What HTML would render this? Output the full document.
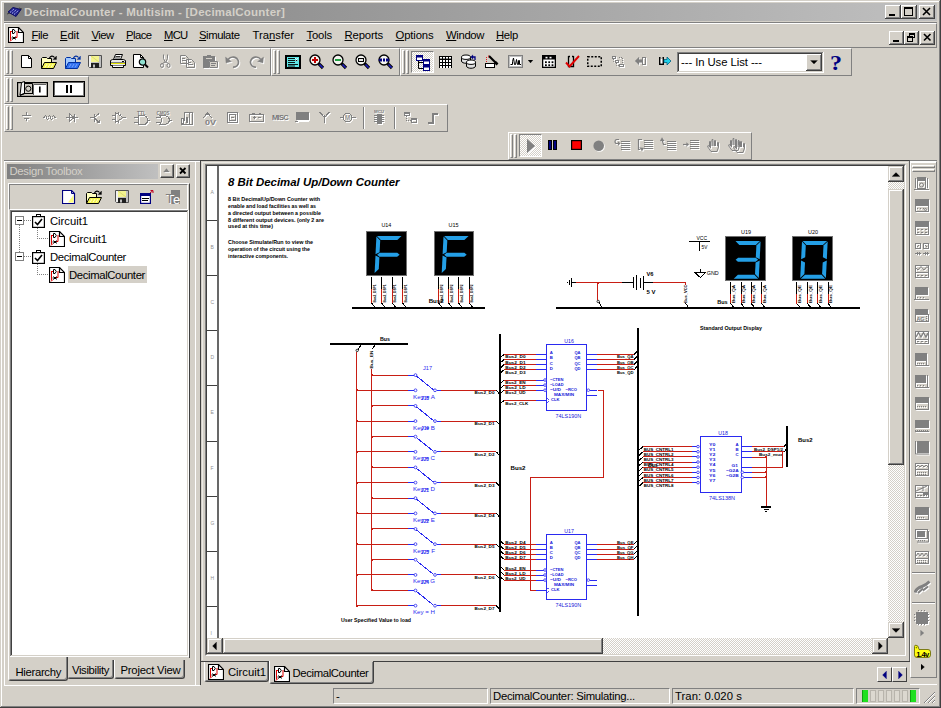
<!DOCTYPE html><html><head><meta charset="utf-8"><title>DecimalCounter - Multisim</title><style>
html,body{margin:0;padding:0}
body{width:941px;height:708px;background:#d4d0c8;position:relative;overflow:hidden;font-family:"Liberation Sans",sans-serif;font-size:11px;color:#000}
.a{position:absolute;box-sizing:border-box;display:block}
.t{position:absolute;white-space:pre}
.raised{box-shadow:inset -1px -1px 0 #404040,inset 1px 1px 0 #fff,inset -2px -2px 0 #808080,inset 2px 2px 0 #d4d0c8;background:#d4d0c8}
.sraised{box-shadow:inset -1px -1px 0 #404040,inset 1px 1px 0 #d4d0c8,inset -2px -2px 0 #808080,inset 2px 2px 0 #fff;background:#d4d0c8}
.sunken{box-shadow:inset -1px -1px 0 #fff,inset 1px 1px 0 #808080,inset -2px -2px 0 #d4d0c8,inset 2px 2px 0 #404040}
.tb{border:1px solid;border-color:#fff #808080 #808080 #fff}
.thin-s{border:1px solid;border-color:#808080 #fff #fff #808080}
.grip{border:1px solid;border-color:#fff #808080 #808080 #fff;width:3px}
.chk{background-color:#d4d0c8;background-image:conic-gradient(#fff 0 25%,#d4d0c8 0 50%,#fff 0 75%,#d4d0c8 0);background-size:2px 2px}
u{text-decoration:underline;text-underline-offset:1px}
</style></head><body>
<div class="a " style="left:0px;top:0px;width:941px;height:708px;box-shadow:inset -1px -1px 0 #404040,inset 1px 1px 0 #d4d0c8,inset -2px -2px 0 #808080,inset 2px 2px 0 #fff;"></div>
<div class="a " style="left:4px;top:3px;width:933px;height:18px;background:linear-gradient(90deg,#808080,#c0c0c0);"></div>
<svg class="a" style="left:6.5px;top:5.5px" width="16" height="13" viewBox="0 0 16 13" ><path d="M1 6L6 1.5L14 3.5L9 10.5Z" stroke="#101060" fill="#202090" stroke-width="1" /><path d="M3 6.5L7 3M5 7.5L9.5 3.5M7 8.5L11.5 4.5" stroke="#c8d0ff" fill="none" stroke-width="1" stroke-dasharray="1.2 1"/><path d="M0 8L3 7M12 2L15 3" stroke="#303030" fill="none" stroke-width="0.8" /></svg>
<div class="t" style="left:24px;top:7.27px;font-size:11.5px;line-height:11.5px;letter-spacing:0.225px;font-weight:bold;color:#d4d0c8;">DecimalCounter - Multisim - [DecimalCounter]</div>
<div class="a raised" style="left:885px;top:5px;width:16px;height:14px;"></div>
<svg class="a" style="left:885px;top:5px" width="16" height="14" viewBox="0 0 16 14" ><rect x="4" y="9" width="6" height="2" fill="#000" /></svg>
<div class="a raised" style="left:901px;top:5px;width:16px;height:14px;"></div>
<svg class="a" style="left:901px;top:5px" width="16" height="14" viewBox="0 0 16 14" ><rect x="3.5" y="2.5" width="8" height="8" fill="none" stroke="#000" stroke-width="1"/><rect x="3" y="2" width="9" height="2" fill="#000" /></svg>
<div class="a raised" style="left:919px;top:5px;width:16px;height:14px;"></div>
<svg class="a" style="left:919px;top:5px" width="16" height="14" viewBox="0 0 16 14" ><path d="M4 3L11 10M11 3L4 10" stroke="#000" fill="none" stroke-width="1.6" /></svg>
<div class="a " style="left:4px;top:22px;width:933px;height:1px;background:#808080"></div>
<div class="a tb" style="left:4px;top:23px;width:933px;height:25px;"></div>
<svg class="a" style="left:8px;top:27px" width="16" height="16" viewBox="0 0 16 16" ><path d="M0.5 0.5H10.5L15.5 5.5V15.5H0.5Z" stroke="#000" fill="#fff" stroke-width="1.2" /><path d="M10.5 0.5V5.5H15.5" stroke="#000" fill="none" stroke-width="1.2" /><path d="M2.5 4V13.5M2.5 4.5H5M9 4V10.5H6.5M2 14.5L4 12.5" stroke="#e00000" fill="none" stroke-width="1" /><path d="M4.5 2.5V6.5H6Q8.5 4.5 6 2.5Z" stroke="#000" fill="#fff" stroke-width="1" /><path d="M4.5 9.5L7.5 12.5M7.5 9.5L4.5 12.5M3.5 11H8" stroke="#000" fill="none" stroke-width="1" /></svg>
<div class="t" style="left:31.5px;top:30.43px;font-size:11.3px;line-height:11.3px;letter-spacing:-0.427px;"><u>F</u>ile</div>
<div class="t" style="left:60px;top:30.43px;font-size:11.3px;line-height:11.3px;letter-spacing:-0.118px;"><u>E</u>dit</div>
<div class="t" style="left:91.5px;top:30.43px;font-size:11.3px;line-height:11.3px;letter-spacing:-0.572px;"><u>V</u>iew</div>
<div class="t" style="left:126px;top:30.43px;font-size:11.3px;line-height:11.3px;letter-spacing:-0.553px;"><u>P</u>lace</div>
<div class="t" style="left:164px;top:30.43px;font-size:11.3px;line-height:11.3px;letter-spacing:-0.745px;"><u>M</u>CU</div>
<div class="t" style="left:199px;top:30.43px;font-size:11.3px;line-height:11.3px;letter-spacing:-0.433px;"><u>S</u>imulate</div>
<div class="t" style="left:252.5px;top:30.43px;font-size:11.3px;line-height:11.3px;letter-spacing:-0.019px;">Tra<u>n</u>sfer</div>
<div class="t" style="left:306.5px;top:30.43px;font-size:11.3px;line-height:11.3px;letter-spacing:-0.176px;"><u>T</u>ools</div>
<div class="t" style="left:344.5px;top:30.43px;font-size:11.3px;line-height:11.3px;letter-spacing:-0.152px;"><u>R</u>eports</div>
<div class="t" style="left:395.5px;top:30.43px;font-size:11.3px;line-height:11.3px;letter-spacing:-0.135px;"><u>O</u>ptions</div>
<div class="t" style="left:446px;top:30.43px;font-size:11.3px;line-height:11.3px;letter-spacing:-0.365px;"><u>W</u>indow</div>
<div class="t" style="left:496px;top:30.43px;font-size:11.3px;line-height:11.3px;letter-spacing:-0.310px;"><u>H</u>elp</div>
<div class="a raised" style="left:889px;top:31px;width:15px;height:14px;"></div>
<svg class="a" style="left:889px;top:31px" width="15" height="14" viewBox="0 0 15 14" ><rect x="4" y="9" width="6" height="2" fill="#000" /></svg>
<div class="a raised" style="left:904px;top:31px;width:15px;height:14px;"></div>
<svg class="a" style="left:904px;top:31px" width="15" height="14" viewBox="0 0 15 14" ><rect x="5.5" y="2.5" width="5" height="4" fill="#d4d0c8" stroke="#000" stroke-width="1"/><rect x="5" y="2" width="6" height="2" fill="#000" /><rect x="3.5" y="5.5" width="5" height="5" fill="#d4d0c8" stroke="#000" stroke-width="1"/><rect x="3" y="5" width="6" height="2" fill="#000" /></svg>
<div class="a raised" style="left:920px;top:31px;width:15px;height:14px;"></div>
<svg class="a" style="left:920px;top:31px" width="15" height="14" viewBox="0 0 15 14" ><path d="M4 3L10.5 9.5M10.5 3L4 9.5" stroke="#000" fill="none" stroke-width="1.6" /></svg>
<div class="a tb" style="left:4px;top:48px;width:267px;height:28px;"></div>
<div class="a grip" style="left:6px;top:50px;width:3px;height:24px;"></div>
<div class="a grip" style="left:10px;top:50px;width:3px;height:24px;"></div>
<div class="a tb" style="left:271px;top:48px;width:129px;height:28px;"></div>
<div class="a grip" style="left:273px;top:50px;width:3px;height:24px;"></div>
<div class="a grip" style="left:277px;top:50px;width:3px;height:24px;"></div>
<div class="a tb" style="left:400px;top:48px;width:452px;height:28px;"></div>
<div class="a grip" style="left:402px;top:50px;width:3px;height:24px;"></div>
<div class="a grip" style="left:406px;top:50px;width:3px;height:24px;"></div>
<svg class="a" style="left:21px;top:55px" width="12" height="14" viewBox="0 0 12 14" ><path d="M0.5 0.5H7.5L10.5 3.5V12.5H0.5Z" stroke="#000" fill="#fff" stroke-width="1" /><path d="M7.5 0.5V3.5H10.5" stroke="#000" fill="none" stroke-width="1" /></svg>
<svg class="a" style="left:41px;top:55px" width="17" height="15" viewBox="0 0 17 15" ><path d="M0.5 13.5V3.5L1.5 2.5H5.5L6.5 3.5H10.5V7" stroke="#000" fill="#ffffc0" stroke-width="1" /><path d="M0.5 13.5L3.5 7.5H15.5L12.5 13.5Z" stroke="#000" fill="#f4f450" stroke-width="1" /><path d="M4 12.5L6 9M7 12.5L9 9M10 12.5L12 9" stroke="#ffffc8" fill="none" stroke-width="1" /><path d="M8.5 3C9.5 0.8 12 0.5 13.5 2.5" stroke="#000" fill="none" stroke-width="1.2" /><path d="M12 4.5H15.5V1Z" stroke="#000" fill="#000" stroke-width="0.3" /></svg>
<svg class="a" style="left:64.5px;top:55px" width="17" height="15" viewBox="0 0 17 15" ><path d="M0.5 13.5V3.5L1.5 2.5H5.5L6.5 3.5H10.5V7" stroke="#0030a0" fill="#a0c8ff" stroke-width="1" /><path d="M0.5 13.5L3.5 7.5H15.5L12.5 13.5Z" stroke="#0030a0" fill="#3070f0" stroke-width="1" /><path d="M4 12.5L6 9M7 12.5L9 9M10 12.5L12 9" stroke="#70a0ff" fill="none" stroke-width="1" /><path d="M8.5 3C9.5 0.8 12 0.5 13.5 2.5" stroke="#0030a0" fill="none" stroke-width="1.2" /><path d="M12 4.5H15.5V1Z" stroke="#0030a0" fill="#0030a0" stroke-width="0.3" /></svg>
<svg class="a" style="left:88px;top:55px" width="15" height="14" viewBox="0 0 15 14" ><path d="M0.5 0.5H13.5V12.5H1.5L0.5 11.5Z" stroke="#505050" fill="#c0c0c0" stroke-width="1" /><rect x="1" y="1" width="2" height="11" fill="#f0f0f0" /><rect x="3" y="1" width="8" height="6" fill="#f4f490" /><path d="M3 1L11 7" stroke="#dcdc70" fill="none" stroke-width="1" /><rect x="3" y="8" width="8" height="5" fill="#202020" /><rect x="5" y="9.5" width="2" height="3" fill="#c0c0c0" /></svg>
<svg class="a" style="left:110px;top:54px" width="17" height="15" viewBox="0 0 17 15" ><path d="M3.5 5.5L5.5 0.5H12.5L10.5 5.5" stroke="#000" fill="#fff" stroke-width="1" /><path d="M5.5 2.5H10.5M5 4H10" stroke="#000" fill="none" stroke-width="0.8" /><path d="M0.5 6.5L2.5 5.5H13.5L15.5 6.5V11.5H0.5Z" stroke="#000" fill="#e8e8e8" stroke-width="1" /><rect x="1" y="9" width="14" height="1" fill="#e0e000" /><rect x="1" y="8" width="14" height="1" fill="#808080" /><path d="M2.5 11.5V13.5H13.5V11.5" stroke="#000" fill="#fff" stroke-width="1" /><rect x="12" y="7" width="2" height="1" fill="#000" /></svg>
<svg class="a" style="left:133px;top:54px" width="17" height="15" viewBox="0 0 17 15" ><path d="M0.5 0.5H7.5L10.5 3.5V13.5H0.5Z" stroke="#000" fill="#fff" stroke-width="1" /><path d="M7.5 0.5V3.5H10.5" stroke="#000" fill="none" stroke-width="1" /><circle cx="9.5" cy="8" r="3.2" fill="#8fe0d0" stroke="#000" stroke-width="1.2"/><path d="M12 10.5L15 13.5" stroke="#000" fill="none" stroke-width="2" /></svg>
<svg class="a" style="left:159.5px;top:54px" width="12" height="16" viewBox="0 0 12 16" ><g transform="translate(1,1)"><path d="M3.5 0.5V4.5L5.5 8.5M7.5 0.5V4.5L5.5 8.5" stroke="#fff" fill="none" stroke-width="1" /><path d="M5 8L2.5 9.5" stroke="#fff" fill="none" stroke-width="1" /><path d="M6 8L8.5 9.5" stroke="#fff" fill="none" stroke-width="1" /><ellipse cx="2" cy="11.5" rx="1.5" ry="2" fill="none" stroke="#fff"/><ellipse cx="8.5" cy="11.5" rx="1.5" ry="2" fill="none" stroke="#fff"/></g><path d="M3.5 0.5V4.5L5.5 8.5M7.5 0.5V4.5L5.5 8.5" stroke="#808080" fill="none" stroke-width="1" /><path d="M5 8L2.5 9.5" stroke="#808080" fill="none" stroke-width="1" /><path d="M6 8L8.5 9.5" stroke="#808080" fill="none" stroke-width="1" /><ellipse cx="2" cy="11.5" rx="1.5" ry="2" fill="none" stroke="#808080"/><ellipse cx="8.5" cy="11.5" rx="1.5" ry="2" fill="none" stroke="#808080"/></svg>
<svg class="a" style="left:180px;top:54.5px" width="16" height="14" viewBox="0 0 16 14" ><g transform="translate(1,1)"><path d="M0.5 0.5H5.5L8.5 3.5V8.5H0.5Z" stroke="#fff" fill="none" stroke-width="1" /><path d="M2 3.5H5M2 5.5H7" stroke="#fff" fill="none" stroke-width="1" /><path d="M6.5 4.5H11.5L14.5 7.5V12.5H6.5Z" stroke="#fff" fill="none" stroke-width="1" /><path d="M8 7.5H11M8 9.5H13" stroke="#fff" fill="none" stroke-width="1" /></g><path d="M0.5 0.5H5.5L8.5 3.5V8.5H0.5Z" stroke="#808080" fill="none" stroke-width="1" /><path d="M2 3.5H5M2 5.5H7" stroke="#808080" fill="none" stroke-width="1" /><path d="M6.5 4.5H11.5L14.5 7.5V12.5H6.5Z" stroke="#808080" fill="none" stroke-width="1" /><path d="M8 7.5H11M8 9.5H13" stroke="#808080" fill="none" stroke-width="1" /></svg>
<svg class="a" style="left:203px;top:54.5px" width="17" height="15" viewBox="0 0 17 15" ><g transform="translate(1,1)"><rect x="0" y="1" width="12" height="12" fill="#fff" /><rect x="4" y="0" width="4" height="2" fill="#fff" /><rect x="6" y="6" width="9" height="7" fill="#fff" /><path d="M6.5 6.5H14.5V12.5H6.5Z" stroke="#fff" fill="#fff" stroke-width="1" /><path d="M8 8.5H13M8 10.5H12" stroke="#fff" fill="none" stroke-width="1" /><rect x="3" y="3" width="6" height="1" fill="#fff" /></g><rect x="0" y="1" width="12" height="12" fill="#808080" /><rect x="4" y="0" width="4" height="2" fill="#808080" /><rect x="6" y="6" width="9" height="7" fill="#fff" /><path d="M6.5 6.5H14.5V12.5H6.5Z" stroke="#808080" fill="#d4d0c8" stroke-width="1" /><path d="M8 8.5H13M8 10.5H12" stroke="#808080" fill="none" stroke-width="1" /><rect x="3" y="3" width="6" height="1" fill="#d4d0c8" /></svg>
<svg class="a" style="left:224.5px;top:55px" width="18" height="15" viewBox="0 0 18 15" ><g transform="translate(1,1)"><path d="M3 4.5C6 1 12 1 13.5 6.5C14 10 11 12.5 8 12" stroke="#fff" fill="none" stroke-width="1.6" /><path d="M0.5 2L1 8L6.5 6.5Z" stroke="#fff" fill="#fff" stroke-width="0.3" /></g><path d="M3 4.5C6 1 12 1 13.5 6.5C14 10 11 12.5 8 12" stroke="#808080" fill="none" stroke-width="1.6" /><path d="M0.5 2L1 8L6.5 6.5Z" stroke="#808080" fill="#808080" stroke-width="0.3" /></svg>
<svg class="a" style="left:248px;top:55px" width="18" height="15" viewBox="0 0 18 15" ><g transform="translate(1,1)"><path d="M13 4.5C10 1 4 1 2.5 6.5C2 10 5 12.5 8 12" stroke="#fff" fill="none" stroke-width="1.6" /><path d="M15.5 2L15 8L9.5 6.5Z" stroke="#fff" fill="#fff" stroke-width="0.3" /></g><path d="M13 4.5C10 1 4 1 2.5 6.5C2 10 5 12.5 8 12" stroke="#808080" fill="none" stroke-width="1.6" /><path d="M15.5 2L15 8L9.5 6.5Z" stroke="#808080" fill="#808080" stroke-width="0.3" /></svg>
<svg class="a" style="left:285px;top:54.5px" width="16" height="14" viewBox="0 0 16 14" ><rect x="0" y="0" width="16" height="14" fill="#000" /><rect x="2" y="2" width="12" height="10" fill="#60e8e8" /><path d="M3 3.5H10M3 5.5H13M3 7.5H10M3 9.5H13M3 11H10" stroke="#000" fill="none" stroke-width="0.9" /><path d="M10 3L13 6M13 3L10 6" stroke="#fff" fill="none" stroke-width="0.7" /></svg>
<svg class="a" style="left:309px;top:54px" width="16" height="16" viewBox="0 0 16 16" ><circle cx="6" cy="6" r="5" fill="#f4f4f0" stroke="#000" stroke-width="1.3"/><path d="M9.7 9.7L14 14" stroke="#000" fill="none" stroke-width="3.2" /><path d="M10.5 10.5L13.7 13.7" stroke="#2020c0" fill="none" stroke-width="1.6" /><rect x="3" y="5" width="6" height="2" fill="#c00000" /><rect x="5" y="3" width="2" height="6" fill="#c00000" /></svg>
<svg class="a" style="left:332px;top:54px" width="16" height="16" viewBox="0 0 16 16" ><circle cx="6" cy="6" r="5" fill="#f4f4f0" stroke="#000" stroke-width="1.3"/><path d="M9.7 9.7L14 14" stroke="#000" fill="none" stroke-width="3.2" /><path d="M10.5 10.5L13.7 13.7" stroke="#2020c0" fill="none" stroke-width="1.6" /><rect x="3" y="5" width="6" height="2" fill="#20a040" /></svg>
<svg class="a" style="left:355px;top:54px" width="16" height="16" viewBox="0 0 16 16" ><circle cx="6" cy="6" r="5" fill="#f4f4f0" stroke="#000" stroke-width="1.3"/><path d="M9.7 9.7L14 14" stroke="#000" fill="none" stroke-width="3.2" /><path d="M10.5 10.5L13.7 13.7" stroke="#2020c0" fill="none" stroke-width="1.6" /><rect x="3.5" y="4.5" width="5" height="3" fill="#e8e8e8" stroke="#000" stroke-width="1"/></svg>
<svg class="a" style="left:378px;top:54px" width="16" height="16" viewBox="0 0 16 16" ><circle cx="6" cy="6" r="5" fill="#f4f4f0" stroke="#000" stroke-width="1.3"/><path d="M9.7 9.7L14 14" stroke="#000" fill="none" stroke-width="3.2" /><path d="M10.5 10.5L13.7 13.7" stroke="#2020c0" fill="none" stroke-width="1.6" /><rect x="2" y="4.5" width="2" height="3" fill="#000080" /><rect x="5" y="4.5" width="2" height="3" fill="#000080" /><rect x="8" y="4.5" width="2" height="3" fill="#000080" /><path d="M0.5 6L2 4.5V7.5ZM11.5 6L10 4.5V7.5Z" stroke="#000080" fill="#000080" stroke-width="0.2" /></svg>
<div class="a chk" style="left:411px;top:51px;width:23px;height:22px;border:1px solid;border-color:#808080 #fff #fff #808080;"></div>
<svg class="a" style="left:416px;top:55px" width="14" height="16" viewBox="0 0 14 16" ><rect x="0.5" y="0.5" width="6" height="5" fill="#fff" stroke="#000080" stroke-width="1"/><rect x="0" y="0" width="7" height="2.5" fill="#000080" /><rect x="7.5" y="4.5" width="6" height="5" fill="#fff" stroke="#000080" stroke-width="1"/><rect x="7" y="4" width="7" height="2.5" fill="#000080" /><rect x="7.5" y="10.5" width="6" height="5" fill="#fff" stroke="#000080" stroke-width="1"/><rect x="7" y="10" width="7" height="2.5" fill="#000080" /><path d="M2.5 6V13.5H7M2.5 7.5H7" stroke="#000" fill="none" stroke-width="1" /></svg>
<svg class="a" style="left:439px;top:56px" width="13" height="12" viewBox="0 0 13 12" ><rect x="0" y="0" width="13" height="12" fill="#000" /><rect x="1" y="1" width="2" height="1.6" fill="#fff" /><rect x="1" y="4" width="2" height="2" fill="#fff" /><rect x="1" y="7" width="2" height="2" fill="#fff" /><rect x="1" y="10" width="2" height="2" fill="#fff" /><rect x="4" y="1" width="2" height="1.6" fill="#fff" /><rect x="4" y="4" width="2" height="2" fill="#fff" /><rect x="4" y="7" width="2" height="2" fill="#fff" /><rect x="4" y="10" width="2" height="2" fill="#fff" /><rect x="7" y="1" width="2" height="1.6" fill="#fff" /><rect x="7" y="4" width="2" height="2" fill="#fff" /><rect x="7" y="7" width="2" height="2" fill="#fff" /><rect x="7" y="10" width="2" height="2" fill="#fff" /><rect x="10" y="1" width="2" height="1.6" fill="#fff" /><rect x="10" y="4" width="2" height="2" fill="#fff" /><rect x="10" y="7" width="2" height="2" fill="#fff" /><rect x="10" y="10" width="2" height="2" fill="#fff" /></svg>
<svg class="a" style="left:461px;top:53.5px" width="17" height="16" viewBox="0 0 17 16" ><path d="M0.5 3V7C0.5 10 9.5 10 9.5 7V3" fill="#e0e0e0" stroke="#000"/><ellipse cx="5" cy="3.2" rx="4.5" ry="2.2" fill="#fff" stroke="#000"/><path d="M5.5 8V12C5.5 15 14.5 15 14.5 12V8" fill="#e0e0e0" stroke="#000"/><ellipse cx="10" cy="8.2" rx="4.5" ry="2.2" fill="#fff" stroke="#000"/><path d="M14 6V3H11" stroke="#000080" fill="none" stroke-width="1.3" /><path d="M9.5 3L12 0.8V5.2Z" stroke="#000080" fill="#000080" stroke-width="0.2" /></svg>
<svg class="a" style="left:485px;top:55px" width="14" height="14" viewBox="0 0 14 14" ><path d="M4 1L12 9" stroke="#000" fill="none" stroke-width="2.2" /><path d="M10 7L12.5 9.5" stroke="#000" fill="none" stroke-width="2.6" /><rect x="0.5" y="8.5" width="9" height="4" fill="#fff" stroke="#000" stroke-width="1"/><path d="M1.5 2V8M3.5 0.5V3" stroke="#e02020" fill="none" stroke-width="1" stroke-dasharray="1 1"/></svg>
<svg class="a" style="left:507.5px;top:55px" width="15" height="13" viewBox="0 0 15 13" ><rect x="0.5" y="0.5" width="14" height="12" fill="#c0c0c0" stroke="#808080" stroke-width="1"/><rect x="2" y="2" width="11" height="9" fill="#fff" /><path d="M2.5 9.5H4.5V6.5L5.5 3L6.5 9.5H7.5L8.5 4.5L9.5 9.5H10.5V5.5H11.5V9.5H13" stroke="#000" fill="none" stroke-width="1" /></svg>
<svg class="a" style="left:528px;top:60px" width="6" height="4" viewBox="0 0 6 4" ><path d="M0 0H5L2.5 3Z" stroke="#000" fill="#000" stroke-width="0.2" /></svg>
<svg class="a" style="left:541.5px;top:55px" width="14" height="13" viewBox="0 0 14 13" ><rect x="0.65" y="0.65" width="12.7" height="11.7" fill="#fff" stroke="#000" stroke-width="1.3"/><rect x="1" y="1" width="12" height="3.5" fill="#000" /><rect x="3.5" y="1.8" width="2" height="1.6" fill="#fff" /><rect x="7.5" y="1.8" width="2" height="1.6" fill="#fff" /><rect x="3" y="6.3" width="1.8" height="1.8" fill="#000" /><rect x="3" y="9.3" width="1.8" height="1.8" fill="#000" /><rect x="6.3" y="6.3" width="1.8" height="1.8" fill="#000" /><rect x="6.3" y="9.3" width="1.8" height="1.8" fill="#000" /><rect x="9.6" y="6.3" width="1.8" height="1.8" fill="#000" /><rect x="9.6" y="9.3" width="1.8" height="1.8" fill="#000" /></svg>
<svg class="a" style="left:564.5px;top:55px" width="16" height="13" viewBox="0 0 16 13" ><path d="M3.5 1V11.5H8.5V1M3.5 1.5H5M7 1.5H8.5" stroke="#000" fill="none" stroke-width="1.3" /><path d="M1 7.5L4.5 11.5L14 1" stroke="#e00000" fill="none" stroke-width="1.9" /></svg>
<svg class="a" style="left:587px;top:56px" width="15" height="11" viewBox="0 0 15 11" ><rect x="0.75" y="0.75" width="13.5" height="9.5" fill="none" stroke="#000" stroke-width="1.5" stroke-dasharray="2 1.5"/></svg>
<svg class="a" style="left:612px;top:56px" width="14" height="12" viewBox="0 0 14 12" ><g transform="translate(1,1)"><rect x="0.5" y="0.5" width="3" height="2" fill="none" stroke="#fff" stroke-width="1"/><rect x="3.5" y="4.5" width="3" height="2" fill="none" stroke="#fff" stroke-width="1"/><rect x="7.5" y="8.5" width="4" height="2" fill="none" stroke="#fff" stroke-width="1"/><path d="M1.5 3V5.5H3M4.5 7V9.5H7M7 1.5H10.5V8" stroke="#fff" fill="none" stroke-width="1" stroke-dasharray="1 1"/></g><rect x="0.5" y="0.5" width="3" height="2" fill="none" stroke="#808080" stroke-width="1"/><rect x="3.5" y="4.5" width="3" height="2" fill="none" stroke="#808080" stroke-width="1"/><rect x="7.5" y="8.5" width="4" height="2" fill="none" stroke="#808080" stroke-width="1"/><path d="M1.5 3V5.5H3M4.5 7V9.5H7M7 1.5H10.5V8" stroke="#808080" fill="none" stroke-width="1" stroke-dasharray="1 1"/></svg>
<svg class="a" style="left:635px;top:57px" width="13" height="10" viewBox="0 0 13 10" ><g transform="translate(1,1)"><path d="M0 4L4 0V2.5H7V5.5H4V8Z" stroke="#fff" fill="#fff" stroke-width="0.2" /><rect x="7.5" y="0.5" width="3" height="7" fill="none" stroke="#fff" stroke-width="1"/></g><path d="M0 4L4 0V2.5H7V5.5H4V8Z" stroke="#808080" fill="#808080" stroke-width="0.2" /><rect x="7.5" y="0.5" width="3" height="7" fill="none" stroke="#808080" stroke-width="1"/></svg>
<svg class="a" style="left:659px;top:57px" width="13" height="9" viewBox="0 0 13 9" ><rect x="0.7" y="0.7" width="3.6" height="6.6" fill="#fff" stroke="#000" stroke-width="1.4"/><rect x="1.5" y="0" width="2" height="1.5" fill="#d4d0c8" /><path d="M5 2.5H8V0L12 4L8 8V5.5H5Z" stroke="#006080" fill="#20d0e8" stroke-width="0.8" /></svg>
<div class="a sunken" style="left:677px;top:52px;width:147px;height:21px;background:#fff"></div>
<div class="t" style="left:681px;top:57.43px;font-size:11.3px;line-height:11.3px;letter-spacing:-0.065px;">--- In Use List ---</div>
<div class="a raised" style="left:806px;top:54px;width:16px;height:17px;"></div>
<svg class="a" style="left:810px;top:60px" width="8" height="5" viewBox="0 0 8 5" ><path d="M0.5 0.5H7.5L4 4Z" stroke="#000" fill="#000" stroke-width="0.2" /></svg>
<div class="t" style="left:830px;top:52.57px;font-size:20px;line-height:20px;font-weight:bold;color:#000080;font-family:'Liberation Serif',serif;transform:scaleX(1.2);transform-origin:0 0;">?</div>
<div class="a tb" style="left:4px;top:76px;width:85px;height:28px;"></div>
<div class="a grip" style="left:6px;top:78px;width:3px;height:24px;"></div>
<div class="a grip" style="left:10px;top:78px;width:3px;height:24px;"></div>
<svg class="a" style="left:17px;top:81px" width="31" height="16" viewBox="0 0 31 16" ><rect x="0.6" y="1.6" width="29.8" height="13.8" fill="#d4d0c8" stroke="#000" stroke-width="1.2"/><rect x="16" y="3" width="13" height="11" fill="#fff" /><path d="M16.5 14V3.5H29" stroke="#606060" fill="none" stroke-width="1" /><rect x="22" y="5.5" width="1.6" height="6" fill="#000" /><path d="M3 14L4.5 1.5L7.5 0.5V12.5Z" stroke="#000" fill="#f4f4f4" stroke-width="1" /><path d="M7.5 2.5H15.5V13" stroke="#000" fill="#c8c4bc" stroke-width="1" /><circle cx="11.3" cy="7.7" r="2.6" fill="#d4d0c8" stroke="#000"/><path d="M3 14.5L7.5 12.5H15" stroke="#000" fill="none" stroke-width="1.2" /></svg>
<svg class="a" style="left:53px;top:81px" width="32" height="16" viewBox="0 0 32 16" ><rect x="0.8" y="0.8" width="30.4" height="14.4" fill="#fff" stroke="#000" stroke-width="1.6"/><rect x="1" y="14" width="30" height="1" fill="#808080" /><rect x="30" y="1" width="1" height="14" fill="#808080" /><rect x="13" y="4" width="2" height="8" fill="#000" /><rect x="17" y="4" width="2" height="8" fill="#000" /></svg>
<div class="a tb" style="left:4px;top:104px;width:444px;height:28px;"></div>
<div class="a grip" style="left:6px;top:106px;width:3px;height:24px;"></div>
<div class="a grip" style="left:10px;top:106px;width:3px;height:24px;"></div>
<svg class="a" style="left:22px;top:112px" width="12" height="12" viewBox="0 0 12 12" shape-rendering="crispEdges"><g transform="translate(1,1)"><path d="M4.5 0V3M4.5 6V9" stroke="#fff" fill="none" stroke-width="1" /><path d="M0 3.5H9M2 6.5H7" stroke="#fff" fill="none" stroke-width="1" /></g><path d="M4.5 0V3M4.5 6V9" stroke="#808080" fill="none" stroke-width="1" /><path d="M0 3.5H9M2 6.5H7" stroke="#808080" fill="none" stroke-width="1" /></svg>
<svg class="a" style="left:43px;top:113.5px" width="16" height="8" viewBox="0 0 16 8" shape-rendering="crispEdges"><g transform="translate(1,1)"><path d="M0 3.5H1.5Q2.5 -0.5 3.5 3.5Q4.5 7 5.5 3.5Q6.5 -0.5 7.5 3.5Q8.5 7 9.5 3.5Q10.5 -0.5 11.5 3.5H13" stroke="#fff" fill="none" stroke-width="1" /></g><path d="M0 3.5H1.5Q2.5 -0.5 3.5 3.5Q4.5 7 5.5 3.5Q6.5 -0.5 7.5 3.5Q8.5 7 9.5 3.5Q10.5 -0.5 11.5 3.5H13" stroke="#808080" fill="none" stroke-width="1" /></svg>
<svg class="a" style="left:66px;top:112.5px" width="14" height="11" viewBox="0 0 14 11" shape-rendering="crispEdges"><g transform="translate(1,1)"><path d="M0 4.5H11.5M3.5 1V8L8 4.5ZM8.5 0.5V8.5" stroke="#fff" fill="none" stroke-width="1" /></g><path d="M0 4.5H11.5M3.5 1V8L8 4.5ZM8.5 0.5V8.5" stroke="#808080" fill="none" stroke-width="1" /></svg>
<svg class="a" style="left:90px;top:112.5px" width="12" height="12" viewBox="0 0 12 12" shape-rendering="crispEdges"><g transform="translate(1,1)"><path d="M0 4.5H4.5M4.5 0.5V9M4.5 4L9 0.5M4.5 5L9 9.5M9 9.5V7M9 9.5H6.5" stroke="#fff" fill="none" stroke-width="1" /></g><path d="M0 4.5H4.5M4.5 0.5V9M4.5 4L9 0.5M4.5 5L9 9.5M9 9.5V7M9 9.5H6.5" stroke="#808080" fill="none" stroke-width="1" /></svg>
<svg class="a" style="left:111.5px;top:111.5px" width="16" height="13" viewBox="0 0 16 13" shape-rendering="crispEdges"><g transform="translate(1,1)"><path d="M0 3.5H3M0 7.5H3M3.5 0.5V10.5L11 5.5ZM11 5.5H13.5M6 0V2.5M6 8.5V11M8 1.5V3.5" stroke="#fff" fill="none" stroke-width="1" /></g><path d="M0 3.5H3M0 7.5H3M3.5 0.5V10.5L11 5.5ZM11 5.5H13.5M6 0V2.5M6 8.5V11M8 1.5V3.5" stroke="#808080" fill="none" stroke-width="1" /></svg>
<svg class="a" style="left:133.5px;top:111px" width="18" height="15" viewBox="0 0 18 15" shape-rendering="crispEdges"><g transform="translate(1,1)"><path d="M0 6.5H4M0 11.5H4M4.5 4.5V13.5H9C15 13.5 15 4.5 9 4.5ZM13.5 9H16" stroke="#fff" fill="none" stroke-width="1" /><text x="3" y="4" font-size="5" fill="#fff" font-family="Liberation Sans, sans-serif" font-weight="bold" textLength="9" lengthAdjust="spacingAndGlyphs">TTL</text></g><path d="M0 6.5H4M0 11.5H4M4.5 4.5V13.5H9C15 13.5 15 4.5 9 4.5ZM13.5 9H16" stroke="#808080" fill="none" stroke-width="1" /><text x="3" y="4" font-size="5" fill="#808080" font-family="Liberation Sans, sans-serif" font-weight="bold" textLength="9" lengthAdjust="spacingAndGlyphs">TTL</text></svg>
<svg class="a" style="left:156px;top:111px" width="19" height="15" viewBox="0 0 19 15" shape-rendering="crispEdges"><g transform="translate(1,1)"><path d="M0 6.5H4M0 11.5H4M3.5 4.5C6 6 6 12 3.5 13.5H8C11 13.5 13 11 14 9C13 7 11 4.5 8 4.5ZM14 9H16" stroke="#fff" fill="none" stroke-width="1" /><text x="0.5" y="4" font-size="5" fill="#fff" font-family="Liberation Sans, sans-serif" font-weight="bold" textLength="13" lengthAdjust="spacingAndGlyphs">CMOS</text></g><path d="M0 6.5H4M0 11.5H4M3.5 4.5C6 6 6 12 3.5 13.5H8C11 13.5 13 11 14 9C13 7 11 4.5 8 4.5ZM14 9H16" stroke="#808080" fill="none" stroke-width="1" /><text x="0.5" y="4" font-size="5" fill="#808080" font-family="Liberation Sans, sans-serif" font-weight="bold" textLength="13" lengthAdjust="spacingAndGlyphs">CMOS</text></svg>
<svg class="a" style="left:181px;top:111.5px" width="14" height="15" viewBox="0 0 14 15" shape-rendering="crispEdges"><g transform="translate(1,1)"><rect x="0.6" y="6.6" width="1.8" height="4.8" fill="none" stroke="#fff" stroke-width="1.2"/><path d="M3.5 9V0.5H8.5V12M8.5 0.5H11.5V12.5H0" stroke="#fff" fill="none" stroke-width="1.2" /><path d="M6 5V10.5" stroke="#fff" fill="none" stroke-width="1.4" /></g><rect x="0.6" y="6.6" width="1.8" height="4.8" fill="none" stroke="#808080" stroke-width="1.2"/><path d="M3.5 9V0.5H8.5V12M8.5 0.5H11.5V12.5H0" stroke="#808080" fill="none" stroke-width="1.2" /><path d="M6 5V10.5" stroke="#808080" fill="none" stroke-width="1.4" /></svg>
<svg class="a" style="left:203px;top:111.5px" width="16" height="15" viewBox="0 0 16 15" shape-rendering="crispEdges"><g transform="translate(1,1)"><path d="M0.5 6L4.5 0.5L8.5 6M4.5 0.5V3" stroke="#fff" fill="none" stroke-width="1" /><text x="2" y="13" font-size="8" fill="#fff" font-family="Liberation Sans, sans-serif" font-weight="bold" textLength="11" lengthAdjust="spacingAndGlyphs">0V</text></g><path d="M0.5 6L4.5 0.5L8.5 6M4.5 0.5V3" stroke="#808080" fill="none" stroke-width="1" /><text x="2" y="13" font-size="8" fill="#808080" font-family="Liberation Sans, sans-serif" font-weight="bold" textLength="11" lengthAdjust="spacingAndGlyphs">0V</text></svg>
<svg class="a" style="left:227px;top:111.5px" width="13" height="13" viewBox="0 0 13 13" shape-rendering="crispEdges"><g transform="translate(1,1)"><rect x="0.5" y="0.5" width="10" height="10" fill="none" stroke="#fff" stroke-width="1"/><rect x="2.5" y="2.5" width="6" height="6" fill="none" stroke="#fff" stroke-width="1"/><path d="M4 5.5H7" stroke="#fff" fill="none" stroke-width="1" /></g><rect x="0.5" y="0.5" width="10" height="10" fill="none" stroke="#808080" stroke-width="1"/><rect x="2.5" y="2.5" width="6" height="6" fill="none" stroke="#808080" stroke-width="1"/><path d="M4 5.5H7" stroke="#808080" fill="none" stroke-width="1" /></svg>
<svg class="a" style="left:249px;top:113px" width="17" height="11" viewBox="0 0 17 11" shape-rendering="crispEdges"><g transform="translate(1,1)"><rect x="0.6" y="1.6" width="13.8" height="6.8" fill="none" stroke="#fff" stroke-width="1.2"/><path d="M3 0.5H5.5M9.5 0.5H12M3.5 4.5H6.5M5 3V6M8.5 4.5H11.5" stroke="#fff" fill="none" stroke-width="1" /></g><rect x="0.6" y="1.6" width="13.8" height="6.8" fill="none" stroke="#808080" stroke-width="1.2"/><path d="M3 0.5H5.5M9.5 0.5H12M3.5 4.5H6.5M5 3V6M8.5 4.5H11.5" stroke="#808080" fill="none" stroke-width="1" /></svg>
<svg class="a" style="left:295px;top:112px" width="16" height="12" viewBox="0 0 16 12" shape-rendering="crispEdges"><g transform="translate(1,1)"><rect x="1" y="0" width="13" height="8" fill="#fff" /><path d="M0 9.5H3" stroke="#fff" fill="none" stroke-width="1" /></g><rect x="1" y="0" width="13" height="8" fill="#808080" /><path d="M0 9.5H3" stroke="#808080" fill="none" stroke-width="1" /><rect x="3" y="9" width="11" height="1" fill="#fff" /></svg>
<svg class="a" style="left:319px;top:112px" width="13" height="13" viewBox="0 0 13 13" shape-rendering="crispEdges"><g transform="translate(1,1)"><path d="M5.5 11V2.5M0.5 0L5.5 5.5L10.5 0" stroke="#fff" fill="none" stroke-width="1.1" /></g><path d="M5.5 11V2.5M0.5 0L5.5 5.5L10.5 0" stroke="#808080" fill="none" stroke-width="1.1" /></svg>
<svg class="a" style="left:340px;top:112.5px" width="18" height="11" viewBox="0 0 18 11" shape-rendering="crispEdges"><g transform="translate(1,1)"><circle cx="7.5" cy="4.5" r="4.2" fill="none" stroke="#fff"/><path d="M0 4.5H3M12 4.5H15.5" stroke="#fff" fill="none" stroke-width="1" /><text x="5" y="7" font-size="6.5" fill="#fff" font-family="Liberation Sans, sans-serif" textLength="5.2" lengthAdjust="spacingAndGlyphs">M</text></g><circle cx="7.5" cy="4.5" r="4.2" fill="none" stroke="#808080"/><path d="M0 4.5H3M12 4.5H15.5" stroke="#808080" fill="none" stroke-width="1" /><text x="5" y="7" font-size="6.5" fill="#808080" font-family="Liberation Sans, sans-serif" textLength="5.2" lengthAdjust="spacingAndGlyphs">M</text></svg>
<svg class="a" style="left:374px;top:110px" width="12" height="16" viewBox="0 0 12 16" shape-rendering="crispEdges"><g transform="translate(1,1)"><rect x="2.5" y="3.5" width="5" height="10" fill="#fff" /><path d="M0 5.5H2.5M0 7.5H2.5M0 9.5H2.5M0 11.5H2.5M7.5 5.5H10M7.5 7.5H10M7.5 9.5H10M7.5 11.5H10" stroke="#fff" fill="none" stroke-width="1" /><text x="0" y="2.6" font-size="3.6" fill="#fff" font-family="Liberation Sans, sans-serif" font-weight="bold" textLength="10" lengthAdjust="spacingAndGlyphs">MCU</text></g><rect x="2.5" y="3.5" width="5" height="10" fill="#808080" /><path d="M0 5.5H2.5M0 7.5H2.5M0 9.5H2.5M0 11.5H2.5M7.5 5.5H10M7.5 7.5H10M7.5 9.5H10M7.5 11.5H10" stroke="#808080" fill="none" stroke-width="1" /><text x="0" y="2.6" font-size="3.6" fill="#808080" font-family="Liberation Sans, sans-serif" font-weight="bold" textLength="10" lengthAdjust="spacingAndGlyphs">MCU</text></svg>
<svg class="a" style="left:404px;top:111.5px" width="15" height="13" viewBox="0 0 15 13" shape-rendering="crispEdges"><g transform="translate(1,1)"><rect x="0.5" y="0.5" width="5" height="3" fill="none" stroke="#fff" stroke-width="1"/><rect x="0" y="0" width="6" height="1.5" fill="#fff" /><rect x="7.5" y="6.5" width="5" height="4" fill="none" stroke="#fff" stroke-width="1"/><rect x="7" y="6" width="6" height="1.5" fill="#fff" /><path d="M2.5 4V8.5H7" stroke="#fff" fill="none" stroke-width="1" stroke-dasharray="1 1"/></g><rect x="0.5" y="0.5" width="5" height="3" fill="none" stroke="#808080" stroke-width="1"/><rect x="0" y="0" width="6" height="1.5" fill="#808080" /><rect x="7.5" y="6.5" width="5" height="4" fill="none" stroke="#808080" stroke-width="1"/><rect x="7" y="6" width="6" height="1.5" fill="#808080" /><path d="M2.5 4V8.5H7" stroke="#808080" fill="none" stroke-width="1" stroke-dasharray="1 1"/></svg>
<svg class="a" style="left:428px;top:112.5px" width="12" height="13" viewBox="0 0 12 13" shape-rendering="crispEdges"><g transform="translate(1,1)"><path d="M0 9.5H5V1H10" stroke="#fff" fill="none" stroke-width="2" /></g><path d="M0 9.5H5V1H10" stroke="#808080" fill="none" stroke-width="2" /></svg>
<div class="t" style="left:273px;top:114.85px;font-size:7.5px;line-height:7.5px;letter-spacing:-0.688px;font-weight:bold;color:#fff;">MISC</div>
<div class="t" style="left:272px;top:113.85px;font-size:7.5px;line-height:7.5px;letter-spacing:-0.688px;font-weight:bold;color:#777;">MISC</div>
<div class="a " style="left:363px;top:107px;width:1px;height:22px;background:#808080"></div>
<div class="a " style="left:364px;top:107px;width:1px;height:22px;background:#fff"></div>
<div class="a " style="left:394px;top:107px;width:1px;height:22px;background:#808080"></div>
<div class="a " style="left:395px;top:107px;width:1px;height:22px;background:#fff"></div>
<div class="a tb" style="left:508px;top:132px;width:244px;height:28px;"></div>
<div class="a grip" style="left:510px;top:134px;width:3px;height:24px;"></div>
<div class="a grip" style="left:514px;top:134px;width:3px;height:24px;"></div>
<div class="a chk" style="left:519px;top:134px;width:23px;height:23px;border:1px solid;border-color:#808080 #fff #fff #808080;"></div>
<svg class="a" style="left:527px;top:139px" width="10" height="16" viewBox="0 0 10 16" ><g transform="translate(1,1)"><path d="M0 0L8 7L0 14Z" stroke="#fff" fill="#fff" stroke-width="0.2" /></g><path d="M0 0L8 7L0 14Z" stroke="#808080" fill="#808080" stroke-width="0.2" /></svg>
<svg class="a" style="left:548px;top:140px" width="10" height="11" viewBox="0 0 10 11" ><rect x="0.5" y="0.5" width="3" height="9" fill="#000080" stroke="#000" stroke-width="1"/><rect x="5.5" y="0.5" width="3" height="9" fill="#000080" stroke="#000" stroke-width="1"/></svg>
<svg class="a" style="left:571px;top:140px" width="11" height="11" viewBox="0 0 11 11" ><rect x="0.6" y="0.6" width="9.8" height="8.8" fill="#ff0000" stroke="#000" stroke-width="1.2"/></svg>
<svg class="a" style="left:593px;top:139.5px" width="13" height="13" viewBox="0 0 13 13" ><circle cx="6.5" cy="6.5" r="5.3" fill="#fff"/><circle cx="5.7" cy="5.7" r="5.3" fill="#808080"/></svg>
<svg class="a" style="left:614px;top:137px" width="18" height="15" viewBox="0 0 18 15" ><g transform="translate(1,1)"><rect x="7" y="4" width="9" height="1" fill="#fff" /><rect x="7" y="6" width="9" height="1" fill="#fff" /><rect x="7" y="8" width="9" height="1" fill="#fff" /><rect x="7" y="10" width="9" height="1" fill="#fff" /><rect x="7" y="12" width="9" height="1" fill="#fff" /><path d="M5 2.5H2.5C0.5 2.5 0.5 6.5 2.5 6.5H5" stroke="#fff" fill="none" stroke-width="1.2" /><path d="M4 4.5L6.5 6.5L4 8.5Z" stroke="#fff" fill="#fff" stroke-width="0.2" /></g><rect x="7" y="4" width="9" height="1" fill="#808080" /><rect x="7" y="6" width="9" height="1" fill="#808080" /><rect x="7" y="8" width="9" height="1" fill="#808080" /><rect x="7" y="10" width="9" height="1" fill="#808080" /><rect x="7" y="12" width="9" height="1" fill="#808080" /><path d="M5 2.5H2.5C0.5 2.5 0.5 6.5 2.5 6.5H5" stroke="#808080" fill="none" stroke-width="1.2" /><path d="M4 4.5L6.5 6.5L4 8.5Z" stroke="#808080" fill="#808080" stroke-width="0.2" /></svg>
<svg class="a" style="left:637px;top:138px" width="18" height="16" viewBox="0 0 18 16" ><g transform="translate(1,1)"><rect x="7" y="2" width="9" height="1" fill="#fff" /><rect x="7" y="4" width="9" height="1" fill="#fff" /><rect x="7" y="6" width="9" height="1" fill="#fff" /><rect x="7" y="8" width="9" height="1" fill="#fff" /><rect x="7" y="10" width="9" height="1" fill="#fff" /><path d="M5 1.5H1.5V11.5H3" stroke="#fff" fill="none" stroke-width="1.2" /><path d="M2.5 9.5L5 13L7 10Z" stroke="#fff" fill="#fff" stroke-width="0.2" /></g><rect x="7" y="2" width="9" height="1" fill="#808080" /><rect x="7" y="4" width="9" height="1" fill="#808080" /><rect x="7" y="6" width="9" height="1" fill="#808080" /><rect x="7" y="8" width="9" height="1" fill="#808080" /><rect x="7" y="10" width="9" height="1" fill="#808080" /><path d="M5 1.5H1.5V11.5H3" stroke="#808080" fill="none" stroke-width="1.2" /><path d="M2.5 9.5L5 13L7 10Z" stroke="#808080" fill="#808080" stroke-width="0.2" /></svg>
<svg class="a" style="left:660px;top:137px" width="18" height="15" viewBox="0 0 18 15" ><g transform="translate(1,1)"><rect x="7" y="4" width="9" height="1" fill="#fff" /><rect x="7" y="6" width="9" height="1" fill="#fff" /><rect x="7" y="8" width="9" height="1" fill="#fff" /><rect x="7" y="10" width="9" height="1" fill="#fff" /><rect x="7" y="12" width="9" height="1" fill="#fff" /><path d="M6 7.5H3.5L2 3" stroke="#fff" fill="none" stroke-width="1.2" /><path d="M0 4L2 0.5L4.5 4Z" stroke="#fff" fill="#fff" stroke-width="0.2" /></g><rect x="7" y="4" width="9" height="1" fill="#808080" /><rect x="7" y="6" width="9" height="1" fill="#808080" /><rect x="7" y="8" width="9" height="1" fill="#808080" /><rect x="7" y="10" width="9" height="1" fill="#808080" /><rect x="7" y="12" width="9" height="1" fill="#808080" /><path d="M6 7.5H3.5L2 3" stroke="#808080" fill="none" stroke-width="1.2" /><path d="M0 4L2 0.5L4.5 4Z" stroke="#808080" fill="#808080" stroke-width="0.2" /></svg>
<svg class="a" style="left:683px;top:137px" width="18" height="15" viewBox="0 0 18 15" ><g transform="translate(1,1)"><rect x="7" y="3" width="9" height="1" fill="#fff" /><rect x="7" y="5" width="9" height="1" fill="#fff" /><rect x="7" y="7" width="9" height="1" fill="#fff" /><rect x="7" y="9" width="9" height="1" fill="#fff" /><rect x="7" y="11" width="9" height="1" fill="#fff" /><path d="M0 7.5H4" stroke="#fff" fill="none" stroke-width="1.2" /><path d="M3.5 5.5L6 7.5L3.5 9.5Z" stroke="#fff" fill="#fff" stroke-width="0.2" /></g><rect x="7" y="3" width="9" height="1" fill="#808080" /><rect x="7" y="5" width="9" height="1" fill="#808080" /><rect x="7" y="7" width="9" height="1" fill="#808080" /><rect x="7" y="9" width="9" height="1" fill="#808080" /><rect x="7" y="11" width="9" height="1" fill="#808080" /><path d="M0 7.5H4" stroke="#808080" fill="none" stroke-width="1.2" /><path d="M3.5 5.5L6 7.5L3.5 9.5Z" stroke="#808080" fill="#808080" stroke-width="0.2" /></svg>
<svg class="a" style="left:707px;top:139px" width="14" height="14" viewBox="0 0 14 14" ><g transform="translate(1,1)"><path d="M3 8L1 6.5L0.5 7.5L4 12.5H10L11.5 8V3.5H10.5V7M8.5 7V1.5H7.5V7M6 7V0.5H5V7M3.5 9V2.5H2.5V8" stroke="#fff" fill="none" stroke-width="1" /></g><path d="M3 8L1 6.5L0.5 7.5L4 12.5H10L11.5 8V3.5H10.5V7M8.5 7V1.5H7.5V7M6 7V0.5H5V7M3.5 9V2.5H2.5V8" stroke="#808080" fill="none" stroke-width="1" /></svg>
<svg class="a" style="left:728px;top:138px" width="19" height="16" viewBox="0 0 19 16" ><g transform="translate(1,1)"><path d="M3 8L1 6.5L0.5 7.5L4 12.5H10L11.5 8V3.5H10.5V7M8.5 7V1.5H7.5V7M6 7V0.5H5V7M3.5 9V2.5H2.5V8" stroke="#fff" fill="none" stroke-width="1" /><g transform="translate(5,2)"><path d="M3 8L1 6.5L0.5 7.5L4 12.5H10L11.5 8V3.5H10.5V7M8.5 7V1.5H7.5V7M6 7V0.5H5V7M3.5 9V2.5H2.5V8" stroke="#fff" fill="none" stroke-width="1" /></g></g><path d="M3 8L1 6.5L0.5 7.5L4 12.5H10L11.5 8V3.5H10.5V7M8.5 7V1.5H7.5V7M6 7V0.5H5V7M3.5 9V2.5H2.5V8" stroke="#808080" fill="none" stroke-width="1" /><g transform="translate(5,2)"><path d="M3 8L1 6.5L0.5 7.5L4 12.5H10L11.5 8V3.5H10.5V7M8.5 7V1.5H7.5V7M6 7V0.5H5V7M3.5 9V2.5H2.5V8" stroke="#808080" fill="none" stroke-width="1" /></g></svg>
<div class="a " style="left:4px;top:160px;width:196px;height:1px;background:#808080"></div>
<div class="a " style="left:4px;top:161px;width:196px;height:1px;background:#fff"></div>
<div class="a " style="left:4px;top:162px;width:1px;height:523px;background:#fff"></div>
<div class="a " style="left:7px;top:164px;width:151px;height:15px;background:linear-gradient(90deg,#808080,#c0c0c0);"></div>
<div class="t" style="left:9.5px;top:166.43px;font-size:11.3px;line-height:11.3px;letter-spacing:-0.290px;color:#d4d0c8;">Design Toolbox</div>
<div class="a " style="left:160px;top:164px;width:14px;height:14px;border:1px solid;border-color:#fff #404040 #404040 #fff;box-shadow:inset -1px -1px 0 #808080;"></div>
<svg class="a" style="left:160px;top:164px" width="14" height="14" viewBox="0 0 14 14" ><g transform="translate(1,1)"><path d="M3.5 8L6.5 4.5L9.5 8Z" stroke="#fff" fill="#fff" stroke-width="0.2" /></g><path d="M3.5 8L6.5 4.5L9.5 8Z" stroke="#808080" fill="#808080" stroke-width="0.2" /></svg>
<div class="a " style="left:176px;top:164px;width:14px;height:14px;border:1px solid;border-color:#fff #404040 #404040 #fff;box-shadow:inset -1px -1px 0 #808080;"></div>
<svg class="a" style="left:176px;top:164px" width="14" height="14" viewBox="0 0 14 14" ><path d="M4 4L9.5 9.5M9.5 4L4 9.5" stroke="#000" fill="none" stroke-width="1.8" /></svg>
<div class="a " style="left:8px;top:183px;width:182px;height:475px;border:1px solid;border-color:#fff #404040 #404040 #fff;border-bottom:none"></div>
<div class="a thin-s" style="left:9px;top:184px;width:179px;height:26px;"></div>
<svg class="a" style="left:62px;top:190px" width="14" height="14" viewBox="0 0 14 14" ><path d="M0.5 0.5H9.5L12.5 3.5V13.5H0.5Z" stroke="#000080" fill="#fff" stroke-width="1.2" /><path d="M9.5 0.5V3.5H12.5" stroke="#000080" fill="none" stroke-width="1" /><path d="M11.5 5V12.5H6Z" stroke="none" fill="#ffff80" stroke-width="0" /></svg>
<svg class="a" style="left:86px;top:189.5px" width="17" height="15" viewBox="0 0 17 15" ><path d="M0.5 13.5V3.5L1.5 2.5H5.5L6.5 3.5H10.5V7" stroke="#000" fill="#ffffc0" stroke-width="1" /><path d="M0.5 13.5L3.5 7.5H15.5L12.5 13.5Z" stroke="#000" fill="#f4f450" stroke-width="1" /><path d="M4 12.5L6 9M7 12.5L9 9M10 12.5L12 9" stroke="#ffffc8" fill="none" stroke-width="1" /><path d="M8.5 3C9.5 0.8 12 0.5 13.5 2.5" stroke="#000" fill="none" stroke-width="1.2" /><path d="M12 4.5H15.5V1Z" stroke="#000" fill="#000" stroke-width="0.3" /></svg>
<svg class="a" style="left:114.5px;top:190px" width="14" height="14" viewBox="0 0 14 14" ><path d="M0.5 0.5H13.5V12.5H1.5L0.5 11.5Z" stroke="#505050" fill="#c0c0c0" stroke-width="1" /><rect x="1" y="1" width="2" height="11" fill="#f0f0f0" /><rect x="3" y="1" width="8" height="6" fill="#f4f490" /><path d="M3 1L11 7" stroke="#dcdc70" fill="none" stroke-width="1" /><rect x="3" y="8" width="8" height="5" fill="#202020" /><rect x="5" y="9.5" width="2" height="3" fill="#c0c0c0" /></svg>
<svg class="a" style="left:139.5px;top:190px" width="15" height="15" viewBox="0 0 15 15" ><rect x="0.6" y="3.6" width="9.8" height="9.8" fill="#fff" stroke="#000080" stroke-width="1.2"/><rect x="0" y="3" width="11" height="3" fill="#000080" /><path d="M2 8.5H9M2 10.5H8" stroke="#000" fill="none" stroke-width="1" /><path d="M10 3L13 0.5M10.5 0.5H13V3" stroke="#c00020" fill="none" stroke-width="1" /></svg>
<div class="a " style="left:171px;top:190px;width:9px;height:14px;background:#808080"></div>
<div class="t" style="left:166.5px;top:192.50px;font-size:13px;line-height:13px;color:#fff;">Te</div>
<div class="t" style="left:165.5px;top:191.50px;font-size:13px;line-height:13px;color:#808080;">T</div>
<div class="a sunken" style="left:10px;top:210px;width:179px;height:447px;background:#fff"></div>
<svg class="a" style="left:0px;top:0px" width="200" height="300" viewBox="0 0 200 300" ><path d="M19.5 225V252" stroke="#808080" stroke-dasharray="1 1"/><path d="M24 220.5H32" stroke="#808080" stroke-dasharray="1 1"/><path d="M24 256.5H32" stroke="#808080" stroke-dasharray="1 1"/><path d="M37.5 228V239" stroke="#808080" stroke-dasharray="1 1"/><path d="M37 238.5H49" stroke="#808080" stroke-dasharray="1 1"/><path d="M37.5 264V275" stroke="#808080" stroke-dasharray="1 1"/><path d="M37 274.5H49" stroke="#808080" stroke-dasharray="1 1"/></svg>
<svg class="a" style="left:15px;top:216px" width="9" height="9" viewBox="0 0 9 9" ><rect x="0.5" y="0.5" width="8" height="8" fill="#fff" stroke="#808080" stroke-width="1"/><rect x="2" y="4" width="5" height="1" fill="#000" /></svg>
<svg class="a" style="left:15px;top:252px" width="9" height="9" viewBox="0 0 9 9" ><rect x="0.5" y="0.5" width="8" height="8" fill="#fff" stroke="#808080" stroke-width="1"/><rect x="2" y="4" width="5" height="1" fill="#000" /></svg>
<svg class="a" style="left:32px;top:214px" width="13" height="14" viewBox="0 0 13 14" ><rect x="0.6" y="2.6" width="11.8" height="10.8" fill="#fff" stroke="#000" stroke-width="1.2"/><rect x="4" y="0" width="5" height="3" fill="#000" /><rect x="5" y="1" width="3" height="1" fill="#fff" /><path d="M3 8L5.5 10.5L10 5" stroke="#000" fill="none" stroke-width="1.6" /></svg>
<svg class="a" style="left:32px;top:250px" width="13" height="14" viewBox="0 0 13 14" ><rect x="0.6" y="2.6" width="11.8" height="10.8" fill="#fff" stroke="#000" stroke-width="1.2"/><rect x="4" y="0" width="5" height="3" fill="#000" /><rect x="5" y="1" width="3" height="1" fill="#fff" /><path d="M3 8L5.5 10.5L10 5" stroke="#000" fill="none" stroke-width="1.6" /></svg>
<svg class="a" style="left:49px;top:231px" width="16" height="16" viewBox="0 0 16 16" ><path d="M0.5 0.5H10.5L15.5 5.5V15.5H0.5Z" stroke="#000" fill="#fff" stroke-width="1.2" /><path d="M10.5 0.5V5.5H15.5" stroke="#000" fill="none" stroke-width="1.2" /><path d="M2.5 4V13.5M2.5 4.5H5M9 4V10.5H6.5M2 14.5L4 12.5" stroke="#e00000" fill="none" stroke-width="1" /><path d="M4.5 2.5V6.5H6Q8.5 4.5 6 2.5Z" stroke="#000" fill="#fff" stroke-width="1" /><path d="M4.5 9.5L7.5 12.5M7.5 9.5L4.5 12.5M3.5 11H8" stroke="#000" fill="none" stroke-width="1" /></svg>
<svg class="a" style="left:49px;top:267px" width="16" height="16" viewBox="0 0 16 16" ><path d="M0.5 0.5H10.5L15.5 5.5V15.5H0.5Z" stroke="#000" fill="#fff" stroke-width="1.2" /><path d="M10.5 0.5V5.5H15.5" stroke="#000" fill="none" stroke-width="1.2" /><path d="M2.5 4V13.5M2.5 4.5H5M9 4V10.5H6.5M2 14.5L4 12.5" stroke="#e00000" fill="none" stroke-width="1" /><path d="M4.5 2.5V6.5H6Q8.5 4.5 6 2.5Z" stroke="#000" fill="#fff" stroke-width="1" /><path d="M4.5 9.5L7.5 12.5M7.5 9.5L4.5 12.5M3.5 11H8" stroke="#000" fill="none" stroke-width="1" /></svg>
<div class="a " style="left:68px;top:266px;width:79px;height:17px;background:#d4d0c8"></div>
<div class="t" style="left:50px;top:216.43px;font-size:11.3px;line-height:11.3px;letter-spacing:-0.038px;">Circuit1</div>
<div class="t" style="left:69px;top:234.43px;font-size:11.3px;line-height:11.3px;letter-spacing:-0.038px;">Circuit1</div>
<div class="t" style="left:50px;top:252.43px;font-size:11.3px;line-height:11.3px;letter-spacing:-0.358px;">DecimalCounter</div>
<div class="t" style="left:69px;top:270.43px;font-size:11.3px;line-height:11.3px;letter-spacing:-0.358px;">DecimalCounter</div>
<div class="a " style="left:67px;top:660px;width:47px;height:19px;border:1px solid;border-top:none;border-color:#fff #404040 #404040 #fff;border-radius:0 0 3px 3px;box-shadow:inset -1px -1px 0 #808080;background:#d4d0c8;"></div>
<div class="a " style="left:114px;top:660px;width:71px;height:19px;border:1px solid;border-top:none;border-color:#fff #404040 #404040 #fff;border-radius:0 0 3px 3px;box-shadow:inset -1px -1px 0 #808080;background:#d4d0c8;"></div>
<div class="a " style="left:8px;top:657px;width:60px;height:24px;border:1px solid;border-top:none;border-color:#fff #404040 #404040 #fff;border-radius:0 0 3px 3px;box-shadow:inset -1px -1px 0 #808080;background:#d4d0c8;"></div>
<div class="t" style="left:15.5px;top:666.93px;font-size:11.3px;line-height:11.3px;letter-spacing:-0.317px;">Hierarchy</div>
<div class="t" style="left:72px;top:665.43px;font-size:11.3px;line-height:11.3px;letter-spacing:-0.361px;">Visibility</div>
<div class="t" style="left:120.5px;top:665.43px;font-size:11.3px;line-height:11.3px;letter-spacing:-0.216px;">Project View</div>
<div class="a " style="left:195px;top:162px;width:1px;height:523px;background:#fff"></div>
<div class="a " style="left:4px;top:685px;width:196px;height:1px;background:#fff"></div>
<div class="a " style="left:200px;top:160px;width:710px;height:502px;background:#d4d0c8;border:1px solid;border-color:#404040 #606060 #606060 #404040;"></div>
<div class="a " style="left:202px;top:162px;width:1px;height:498px;background:#ebe9e4"></div>
<div class="a " style="left:202px;top:162px;width:706px;height:1px;background:#ebe9e4"></div>
<div class="a " style="left:205px;top:164px;width:701px;height:492px;border:1px solid;border-color:#808080 #fff #fff #808080;"></div>
<div class="a " style="left:206px;top:165px;width:699px;height:490px;border:1px solid;border-color:#404040 #d4d0c8 #d4d0c8 #404040;background:#fff"></div>
<div class="a chk" style="left:888px;top:166px;width:16px;height:472px;"></div>
<div class="a sraised" style="left:888px;top:166px;width:16px;height:16px;"></div>
<svg class="a" style="left:892px;top:172px" width="8" height="5" viewBox="0 0 8 5" ><path d="M0 4.5H8L4 0.5Z" stroke="#000" fill="#000" stroke-width="0.2" /></svg>
<div class="a sraised" style="left:888px;top:189px;width:16px;height:276px;"></div>
<div class="a sraised" style="left:888px;top:622px;width:16px;height:16px;"></div>
<svg class="a" style="left:892px;top:628px" width="8" height="5" viewBox="0 0 8 5" ><path d="M0 0.5H8L4 4.5Z" stroke="#000" fill="#000" stroke-width="0.2" /></svg>
<div class="a chk" style="left:207px;top:638px;width:681px;height:16px;"></div>
<div class="a sraised" style="left:207px;top:638px;width:16px;height:16px;"></div>
<svg class="a" style="left:212px;top:642px" width="5" height="8" viewBox="0 0 5 8" ><path d="M4.5 0V8L0.5 4Z" stroke="#000" fill="#000" stroke-width="0.2" /></svg>
<div class="a sraised" style="left:223px;top:638px;width:380px;height:16px;"></div>
<div class="a sraised" style="left:872px;top:638px;width:16px;height:16px;"></div>
<svg class="a" style="left:878px;top:642px" width="5" height="8" viewBox="0 0 5 8" ><path d="M0.5 0V8L4.5 4Z" stroke="#000" fill="#000" stroke-width="0.2" /></svg>
<div class="a " style="left:888px;top:638px;width:16px;height:16px;background:#d4d0c8"></div>
<svg class="a" style="left:207px;top:166px" width="681" height="472" viewBox="207 166 681 472" font-family="Liberation Sans, sans-serif" shape-rendering="crispEdges"><rect x="217" y="165" width="2" height="480" fill="#686868" stroke="none" stroke-width="1"/>
<line x1="207" y1="220.6" x2="217" y2="220.6" stroke="#404040" stroke-width="1"/>
<line x1="207" y1="275.7" x2="217" y2="275.7" stroke="#404040" stroke-width="1"/>
<line x1="207" y1="330.8" x2="217" y2="330.8" stroke="#404040" stroke-width="1"/>
<line x1="207" y1="385.9" x2="217" y2="385.9" stroke="#404040" stroke-width="1"/>
<line x1="207" y1="441" x2="217" y2="441" stroke="#404040" stroke-width="1"/>
<line x1="207" y1="496.1" x2="217" y2="496.1" stroke="#404040" stroke-width="1"/>
<line x1="207" y1="551.2" x2="217" y2="551.2" stroke="#404040" stroke-width="1"/>
<line x1="207" y1="606.3" x2="217" y2="606.3" stroke="#404040" stroke-width="1"/>
<text x="210.5" y="194" font-size="5" fill="#909090">A</text>
<text x="210.5" y="249.1" font-size="5" fill="#909090">B</text>
<text x="210.5" y="304.2" font-size="5" fill="#909090">C</text>
<text x="210.5" y="359.3" font-size="5" fill="#909090">D</text>
<text x="210.5" y="414.4" font-size="5" fill="#909090">E</text>
<text x="210.5" y="469.5" font-size="5" fill="#909090">F</text>
<text x="210.5" y="524.6" font-size="5" fill="#909090">G</text>
<text x="210.5" y="579.7" font-size="5" fill="#909090">H</text>
<text x="210.5" y="634.8" font-size="5" fill="#909090">I</text>
<text x="228" y="185.5" font-size="11.3" fill="#000" textLength="171.5" lengthAdjust="spacingAndGlyphs" font-weight="bold" font-style="italic">8 Bit Decimal Up/Down Counter</text>
<text x="228" y="201" font-size="5.6" fill="#000" textLength="92" lengthAdjust="spacingAndGlyphs" font-weight="bold">8 Bit DecimalUp/Down Counter with</text>
<text x="228" y="208" font-size="5.6" fill="#000" textLength="88" lengthAdjust="spacingAndGlyphs" font-weight="bold">enable and load facilities as well as</text>
<text x="228" y="215" font-size="5.6" fill="#000" textLength="93" lengthAdjust="spacingAndGlyphs" font-weight="bold">a directed output between a possible</text>
<text x="228" y="222" font-size="5.6" fill="#000" textLength="96" lengthAdjust="spacingAndGlyphs" font-weight="bold">8 different output devices. (only 2 are</text>
<text x="228" y="227.7" font-size="5.6" fill="#000" textLength="45" lengthAdjust="spacingAndGlyphs" font-weight="bold">used at this time)</text>
<text x="228" y="244" font-size="5.6" fill="#000" textLength="85" lengthAdjust="spacingAndGlyphs" font-weight="bold">Choose Simulate/Run to view the</text>
<text x="228" y="251" font-size="5.6" fill="#000" textLength="82" lengthAdjust="spacingAndGlyphs" font-weight="bold">operation of the circuit using the</text>
<text x="228" y="258" font-size="5.6" fill="#000" textLength="60" lengthAdjust="spacingAndGlyphs" font-weight="bold">interactive components.</text>
<rect x="366.9" y="231.7" width="39.5" height="44.2" fill="#000" stroke="#707070" stroke-width="1"/>
<polygon shape-rendering="geometricPrecision" points="377.0,235.9 401.5,235.9 397.3,239.9 380.8,239.9" fill="#249fe6"/>
<polygon shape-rendering="geometricPrecision" points="377.1,254.8 379.6,252.8 397.3,252.8 399.6,254.8 397.1,256.8 379.4,256.8" fill="#249fe6"/>
<polygon shape-rendering="geometricPrecision" points="376.4,236.5 380.2,240.5 379.6,252.2 375.5,254.2" fill="#249fe6"/>
<polygon shape-rendering="geometricPrecision" points="375.5,255.4 379.4,257.4 378.8,269.1 374.6,273.1" fill="#249fe6"/>
<rect x="434" y="231.7" width="39.5" height="44.2" fill="#000" stroke="#707070" stroke-width="1"/>
<polygon shape-rendering="geometricPrecision" points="444.1,235.9 468.6,235.9 464.4,239.9 447.9,239.9" fill="#249fe6"/>
<polygon shape-rendering="geometricPrecision" points="444.2,254.8 446.7,252.8 464.4,252.8 466.7,254.8 464.2,256.8 446.5,256.8" fill="#249fe6"/>
<polygon shape-rendering="geometricPrecision" points="443.5,236.5 447.3,240.5 446.7,252.2 442.6,254.2" fill="#249fe6"/>
<polygon shape-rendering="geometricPrecision" points="442.6,255.4 446.5,257.4 445.9,269.1 441.7,273.1" fill="#249fe6"/>
<text x="386.4" y="227.4" font-size="5.5" fill="#000" textLength="10" lengthAdjust="spacingAndGlyphs" text-anchor="middle">U14</text>
<text x="453.6" y="227.4" font-size="5.5" fill="#000" textLength="10" lengthAdjust="spacingAndGlyphs" text-anchor="middle">U15</text>
<line x1="371.5" y1="276.5" x2="371.5" y2="288.5" stroke="#000" stroke-width="1"/>
<line x1="371.5" y1="288.5" x2="371.5" y2="303" stroke="#c81e14" stroke-width="1"/>
<line x1="371.5" y1="303" x2="375" y2="307" stroke="#000" stroke-width="1"/>
<text x="375.7" y="302.5" font-size="4" fill="#000" textLength="18" lengthAdjust="spacingAndGlyphs" font-weight="bold" transform="rotate(-90 375.7 302.5)">Bus2_DSP1</text>
<line x1="381.5" y1="276.5" x2="381.5" y2="288.5" stroke="#000" stroke-width="1"/>
<line x1="381.5" y1="288.5" x2="381.5" y2="303" stroke="#c81e14" stroke-width="1"/>
<line x1="381.5" y1="303" x2="385" y2="307" stroke="#000" stroke-width="1"/>
<text x="385.7" y="302.5" font-size="4" fill="#000" textLength="18" lengthAdjust="spacingAndGlyphs" font-weight="bold" transform="rotate(-90 385.7 302.5)">Bus2_DSP1</text>
<line x1="392" y1="276.5" x2="392" y2="288.5" stroke="#000" stroke-width="1"/>
<line x1="392" y1="288.5" x2="392" y2="303" stroke="#c81e14" stroke-width="1"/>
<line x1="392" y1="303" x2="395.5" y2="307" stroke="#000" stroke-width="1"/>
<text x="396.2" y="302.5" font-size="4" fill="#000" textLength="18" lengthAdjust="spacingAndGlyphs" font-weight="bold" transform="rotate(-90 396.2 302.5)">Bus2_DSP1</text>
<line x1="402.5" y1="276.5" x2="402.5" y2="288.5" stroke="#000" stroke-width="1"/>
<line x1="402.5" y1="288.5" x2="402.5" y2="303" stroke="#c81e14" stroke-width="1"/>
<line x1="402.5" y1="303" x2="406" y2="307" stroke="#000" stroke-width="1"/>
<text x="406.7" y="302.5" font-size="4" fill="#000" textLength="18" lengthAdjust="spacingAndGlyphs" font-weight="bold" transform="rotate(-90 406.7 302.5)">Bus2_DSP1</text>
<line x1="438.5" y1="276.5" x2="438.5" y2="288.5" stroke="#000" stroke-width="1"/>
<line x1="438.5" y1="288.5" x2="438.5" y2="303" stroke="#c81e14" stroke-width="1"/>
<line x1="438.5" y1="303" x2="442" y2="307" stroke="#000" stroke-width="1"/>
<text x="442.7" y="302.5" font-size="4" fill="#000" textLength="18" lengthAdjust="spacingAndGlyphs" font-weight="bold" transform="rotate(-90 442.7 302.5)">Bus2_DSP2</text>
<line x1="448.5" y1="276.5" x2="448.5" y2="288.5" stroke="#000" stroke-width="1"/>
<line x1="448.5" y1="288.5" x2="448.5" y2="303" stroke="#c81e14" stroke-width="1"/>
<line x1="448.5" y1="303" x2="452" y2="307" stroke="#000" stroke-width="1"/>
<text x="452.7" y="302.5" font-size="4" fill="#000" textLength="18" lengthAdjust="spacingAndGlyphs" font-weight="bold" transform="rotate(-90 452.7 302.5)">Bus2_DSP2</text>
<line x1="458.5" y1="276.5" x2="458.5" y2="288.5" stroke="#000" stroke-width="1"/>
<line x1="458.5" y1="288.5" x2="458.5" y2="303" stroke="#c81e14" stroke-width="1"/>
<line x1="458.5" y1="303" x2="462" y2="307" stroke="#000" stroke-width="1"/>
<text x="462.7" y="302.5" font-size="4" fill="#000" textLength="18" lengthAdjust="spacingAndGlyphs" font-weight="bold" transform="rotate(-90 462.7 302.5)">Bus2_DSP2</text>
<line x1="469" y1="276.5" x2="469" y2="288.5" stroke="#000" stroke-width="1"/>
<line x1="469" y1="288.5" x2="469" y2="303" stroke="#c81e14" stroke-width="1"/>
<line x1="469" y1="303" x2="472.5" y2="307" stroke="#000" stroke-width="1"/>
<text x="473.2" y="302.5" font-size="4" fill="#000" textLength="18" lengthAdjust="spacingAndGlyphs" font-weight="bold" transform="rotate(-90 473.2 302.5)">Bus2_DSP2</text>
<line x1="351.5" y1="307.5" x2="485.4" y2="307.5" stroke="#000" stroke-width="2"/>
<text x="428.7" y="303.2" font-size="5.5" fill="#000" textLength="15" lengthAdjust="spacingAndGlyphs" font-weight="bold">Bus2</text>
<line x1="556" y1="308" x2="860" y2="308" stroke="#000" stroke-width="2"/>
<rect x="725.4" y="236.7" width="39.8" height="44.2" fill="#000" stroke="#707070" stroke-width="1"/>
<polygon shape-rendering="geometricPrecision" points="735.5,240.9 760.0,240.9 755.8,244.9 739.3,244.9" fill="#249fe6"/>
<polygon shape-rendering="geometricPrecision" points="733.7,278.7 758.2,278.7 754.4,274.7 737.9,274.7" fill="#249fe6"/>
<polygon shape-rendering="geometricPrecision" points="735.6,259.8 738.1,257.8 755.8,257.8 758.1,259.8 755.6,261.8 737.9,261.8" fill="#249fe6"/>
<polygon shape-rendering="geometricPrecision" points="760.6,241.5 756.4,245.5 755.8,257.2 759.7,259.2" fill="#249fe6"/>
<polygon shape-rendering="geometricPrecision" points="759.7,260.4 755.6,262.4 755.0,274.1 758.8,278.1" fill="#249fe6"/>
<rect x="792.5" y="236.7" width="40" height="44.2" fill="#000" stroke="#707070" stroke-width="1"/>
<polygon shape-rendering="geometricPrecision" points="802.6,240.9 827.1,240.9 822.9,244.9 806.4,244.9" fill="#249fe6"/>
<polygon shape-rendering="geometricPrecision" points="800.8,278.7 825.3,278.7 821.5,274.7 805.0,274.7" fill="#249fe6"/>
<polygon shape-rendering="geometricPrecision" points="802.0,241.5 805.8,245.5 805.2,257.2 801.1,259.2" fill="#249fe6"/>
<polygon shape-rendering="geometricPrecision" points="801.1,260.4 805.0,262.4 804.4,274.1 800.2,278.1" fill="#249fe6"/>
<polygon shape-rendering="geometricPrecision" points="827.7,241.5 823.5,245.5 822.9,257.2 826.8,259.2" fill="#249fe6"/>
<polygon shape-rendering="geometricPrecision" points="826.8,260.4 822.7,262.4 822.1,274.1 825.9,278.1" fill="#249fe6"/>
<text x="746" y="234" font-size="5.5" fill="#000" textLength="10" lengthAdjust="spacingAndGlyphs" text-anchor="middle">U19</text>
<text x="813" y="234" font-size="5.5" fill="#000" textLength="10" lengthAdjust="spacingAndGlyphs" text-anchor="middle">U20</text>
<line x1="730.5" y1="281.5" x2="730.5" y2="293.5" stroke="#000" stroke-width="1"/>
<line x1="730.5" y1="293.5" x2="730.5" y2="303.5" stroke="#c81e14" stroke-width="1"/>
<line x1="730.5" y1="303.5" x2="734" y2="307.5" stroke="#000" stroke-width="1"/>
<text x="734.7" y="303" font-size="4" fill="#000" textLength="18" lengthAdjust="spacingAndGlyphs" font-weight="bold" transform="rotate(-90 734.7 303)">Bus_QA</text>
<line x1="741" y1="281.5" x2="741" y2="293.5" stroke="#000" stroke-width="1"/>
<line x1="741" y1="293.5" x2="741" y2="303.5" stroke="#c81e14" stroke-width="1"/>
<line x1="741" y1="303.5" x2="744.5" y2="307.5" stroke="#000" stroke-width="1"/>
<text x="745.2" y="303" font-size="4" fill="#000" textLength="18" lengthAdjust="spacingAndGlyphs" font-weight="bold" transform="rotate(-90 745.2 303)">Bus_QA</text>
<line x1="751.2" y1="281.5" x2="751.2" y2="293.5" stroke="#000" stroke-width="1"/>
<line x1="751.2" y1="293.5" x2="751.2" y2="303.5" stroke="#c81e14" stroke-width="1"/>
<line x1="751.2" y1="303.5" x2="754.7" y2="307.5" stroke="#000" stroke-width="1"/>
<text x="755.4" y="303" font-size="4" fill="#000" textLength="18" lengthAdjust="spacingAndGlyphs" font-weight="bold" transform="rotate(-90 755.4 303)">Bus_QA</text>
<line x1="761.5" y1="281.5" x2="761.5" y2="293.5" stroke="#000" stroke-width="1"/>
<line x1="761.5" y1="293.5" x2="761.5" y2="303.5" stroke="#c81e14" stroke-width="1"/>
<line x1="761.5" y1="303.5" x2="765" y2="307.5" stroke="#000" stroke-width="1"/>
<text x="765.7" y="303" font-size="4" fill="#000" textLength="18" lengthAdjust="spacingAndGlyphs" font-weight="bold" transform="rotate(-90 765.7 303)">Bus_QA</text>
<line x1="796.8" y1="281.5" x2="796.8" y2="293.5" stroke="#000" stroke-width="1"/>
<line x1="796.8" y1="293.5" x2="796.8" y2="303.5" stroke="#c81e14" stroke-width="1"/>
<line x1="796.8" y1="303.5" x2="800.3" y2="307.5" stroke="#000" stroke-width="1"/>
<text x="801" y="303" font-size="4" fill="#000" textLength="18" lengthAdjust="spacingAndGlyphs" font-weight="bold" transform="rotate(-90 801 303)">Bus_QE</text>
<line x1="807.3" y1="281.5" x2="807.3" y2="293.5" stroke="#000" stroke-width="1"/>
<line x1="807.3" y1="293.5" x2="807.3" y2="303.5" stroke="#c81e14" stroke-width="1"/>
<line x1="807.3" y1="303.5" x2="810.8" y2="307.5" stroke="#000" stroke-width="1"/>
<text x="811.5" y="303" font-size="4" fill="#000" textLength="18" lengthAdjust="spacingAndGlyphs" font-weight="bold" transform="rotate(-90 811.5 303)">Bus_QE</text>
<line x1="817.5" y1="281.5" x2="817.5" y2="293.5" stroke="#000" stroke-width="1"/>
<line x1="817.5" y1="293.5" x2="817.5" y2="303.5" stroke="#c81e14" stroke-width="1"/>
<line x1="817.5" y1="303.5" x2="821" y2="307.5" stroke="#000" stroke-width="1"/>
<text x="821.7" y="303" font-size="4" fill="#000" textLength="18" lengthAdjust="spacingAndGlyphs" font-weight="bold" transform="rotate(-90 821.7 303)">Bus_QE</text>
<line x1="828" y1="281.5" x2="828" y2="293.5" stroke="#000" stroke-width="1"/>
<line x1="828" y1="293.5" x2="828" y2="303.5" stroke="#c81e14" stroke-width="1"/>
<line x1="828" y1="303.5" x2="831.5" y2="307.5" stroke="#000" stroke-width="1"/>
<text x="832.2" y="303" font-size="4" fill="#000" textLength="18" lengthAdjust="spacingAndGlyphs" font-weight="bold" transform="rotate(-90 832.2 303)">Bus_QE</text>
<text x="717.2" y="303.7" font-size="5.5" fill="#000" textLength="10.5" lengthAdjust="spacingAndGlyphs" font-weight="bold">Bus</text>
<text x="700" y="329.5" font-size="5.5" fill="#000" textLength="62" lengthAdjust="spacingAndGlyphs" font-weight="bold">Standard Output Display</text>
<line x1="571.5" y1="277.5" x2="571.5" y2="287" stroke="#000" stroke-width="1.4"/>
<line x1="569.5" y1="280" x2="569.5" y2="284.5" stroke="#000" stroke-width="1"/>
<line x1="567.8" y1="281.5" x2="567.8" y2="283.2" stroke="#000" stroke-width="1"/>
<line x1="572" y1="282.5" x2="575.5" y2="282.5" stroke="#000" stroke-width="1"/>
<line x1="575.5" y1="282.5" x2="622" y2="282.5" stroke="#c81e14" stroke-width="1"/>
<line x1="622" y1="282.5" x2="633" y2="282.5" stroke="#000" stroke-width="1"/>
<line x1="633.5" y1="277" x2="633.5" y2="288" stroke="#000" stroke-width="1"/>
<line x1="636.8" y1="275" x2="636.8" y2="290" stroke="#000" stroke-width="1"/>
<line x1="640.2" y1="277.5" x2="640.2" y2="287.5" stroke="#000" stroke-width="1"/>
<line x1="643.5" y1="275.5" x2="643.5" y2="289.5" stroke="#000" stroke-width="1"/>
<line x1="643.5" y1="282.5" x2="653" y2="282.5" stroke="#000" stroke-width="1"/>
<line x1="653" y1="282.5" x2="685.5" y2="282.5" stroke="#c81e14" stroke-width="1"/>
<line x1="685.5" y1="282.5" x2="685.5" y2="285" stroke="#c81e14" stroke-width="1"/>
<line x1="685.5" y1="303" x2="688.5" y2="307.5" stroke="#000" stroke-width="1"/>
<text x="687.3" y="303" font-size="4" fill="#000" textLength="18.5" lengthAdjust="spacingAndGlyphs" font-weight="bold" transform="rotate(-90 687.3 303)">Bus_VCC</text>
<line x1="597.5" y1="282.5" x2="597.5" y2="300.3" stroke="#c81e14" stroke-width="1"/>
<rect x="596.5" y="281.5" width="2" height="2" fill="#c81e14"/>
<circle shape-rendering="geometricPrecision" cx="598.2" cy="301.5" r="1.2" fill="#fff" stroke="#000" stroke-width="0.8"/>
<line x1="599" y1="302.5" x2="602" y2="307.5" stroke="#000" stroke-width="1"/>
<text x="646.5" y="275.6" font-size="5.5" fill="#000" textLength="7" lengthAdjust="spacingAndGlyphs" font-weight="bold">V6</text>
<text x="646.5" y="294" font-size="5.5" fill="#000" textLength="9" lengthAdjust="spacingAndGlyphs" font-weight="bold">5 V</text>
<line x1="689" y1="241.6" x2="710" y2="241.6" stroke="#000" stroke-width="1"/>
<line x1="699.5" y1="241.6" x2="699.5" y2="250.6" stroke="#000" stroke-width="1"/>
<text x="696.5" y="239.6" font-size="5.5" fill="#000" textLength="10.5" lengthAdjust="spacingAndGlyphs">VCC</text>
<text x="701.6" y="249.3" font-size="5.5" fill="#000" textLength="5.8" lengthAdjust="spacingAndGlyphs">5V</text>
<line x1="700.5" y1="268.5" x2="700.5" y2="272" stroke="#000" stroke-width="1"/>
<polyline points="694.3,272 706.2,272 700.3,277.5 694.3,272" fill="none" stroke="#000" stroke-width="1"/>
<text x="706.7" y="274.8" font-size="5.5" fill="#000" textLength="12" lengthAdjust="spacingAndGlyphs">GND</text>
<line x1="330" y1="343.6" x2="408" y2="343.6" stroke="#000" stroke-width="2"/>
<text x="380" y="340.5" font-size="5.5" fill="#000" textLength="10" lengthAdjust="spacingAndGlyphs" font-weight="bold">Bus</text>
<circle shape-rendering="geometricPrecision" cx="357.2" cy="350.4" r="1.2" fill="#fff" stroke="#000" stroke-width="0.8"/>
<line x1="358" y1="349.4" x2="361.5" y2="344.5" stroke="#000" stroke-width="1"/>
<line x1="356.5" y1="352" x2="356.5" y2="605.7" stroke="#c81e14" stroke-width="1"/>
<line x1="375.5" y1="344.5" x2="372" y2="349" stroke="#000" stroke-width="1"/>
<line x1="371.5" y1="369" x2="371.5" y2="590.5" stroke="#c81e14" stroke-width="1"/>
<text x="373.3" y="368.5" font-size="4" fill="#000" textLength="18" lengthAdjust="spacingAndGlyphs" font-weight="bold" transform="rotate(-90 373.3 368.5)">Bus_EN</text>
<line x1="499.5" y1="334" x2="499.5" y2="612" stroke="#000" stroke-width="2"/>
<line x1="638" y1="328" x2="638" y2="616" stroke="#000" stroke-width="2"/>
<text x="510.5" y="469.5" font-size="5.5" fill="#000" textLength="15" lengthAdjust="spacingAndGlyphs" font-weight="bold">Bus2</text>
<line x1="371.5" y1="375.1" x2="408" y2="375.1" stroke="#c81e14" stroke-width="1"/>
<rect x="370.5" y="374.1" width="2" height="2" fill="#c81e14"/>
<line x1="408" y1="375.1" x2="414" y2="375.1" stroke="#2a2af0" stroke-width="1"/>
<circle shape-rendering="geometricPrecision" cx="415.5" cy="375.1" r="1.4" fill="#fff" stroke="#2a2af0" stroke-width="0.8"/>
<line x1="356.5" y1="390.3" x2="408" y2="390.3" stroke="#c81e14" stroke-width="1"/>
<rect x="355.5" y="389.3" width="2" height="2" fill="#c81e14"/>
<line x1="408" y1="390.3" x2="414" y2="390.3" stroke="#2a2af0" stroke-width="1"/>
<circle shape-rendering="geometricPrecision" cx="415.5" cy="390.3" r="1.4" fill="#fff" stroke="#2a2af0" stroke-width="0.8"/>
<line x1="416.5" y1="376.1" x2="433.5" y2="389.8" stroke="#2a2af0" stroke-width="1"/>
<circle shape-rendering="geometricPrecision" cx="435" cy="390.3" r="1.4" fill="#fff" stroke="#2a2af0" stroke-width="0.8"/>
<line x1="436.5" y1="390.3" x2="441" y2="390.3" stroke="#2a2af0" stroke-width="1"/>
<line x1="441" y1="390.3" x2="496.3" y2="390.3" stroke="#c81e14" stroke-width="1"/>
<line x1="496.3" y1="390.3" x2="499.5" y2="393.9" stroke="#000" stroke-width="1"/>
<text x="474.6" y="394.3" font-size="4.3" fill="#000" textLength="20" lengthAdjust="spacingAndGlyphs" font-weight="bold">Bus2_D0</text>
<text x="413" y="398.8" font-size="5.5" fill="#2a2af0" textLength="22" lengthAdjust="spacingAndGlyphs">Key = A</text>
<text x="423" y="369.6" font-size="5.5" fill="#2a2af0" textLength="9" lengthAdjust="spacingAndGlyphs">J17</text>
<line x1="371.5" y1="405.87" x2="408" y2="405.87" stroke="#c81e14" stroke-width="1"/>
<rect x="370.5" y="404.87" width="2" height="2" fill="#c81e14"/>
<line x1="408" y1="405.87" x2="414" y2="405.87" stroke="#2a2af0" stroke-width="1"/>
<circle shape-rendering="geometricPrecision" cx="415.5" cy="405.87" r="1.4" fill="#fff" stroke="#2a2af0" stroke-width="0.8"/>
<line x1="356.5" y1="421.07" x2="408" y2="421.07" stroke="#c81e14" stroke-width="1"/>
<rect x="355.5" y="420.07" width="2" height="2" fill="#c81e14"/>
<line x1="408" y1="421.07" x2="414" y2="421.07" stroke="#2a2af0" stroke-width="1"/>
<circle shape-rendering="geometricPrecision" cx="415.5" cy="421.07" r="1.4" fill="#fff" stroke="#2a2af0" stroke-width="0.8"/>
<line x1="416.5" y1="406.87" x2="433.5" y2="420.57" stroke="#2a2af0" stroke-width="1"/>
<circle shape-rendering="geometricPrecision" cx="435" cy="421.07" r="1.4" fill="#fff" stroke="#2a2af0" stroke-width="0.8"/>
<line x1="436.5" y1="421.07" x2="441" y2="421.07" stroke="#2a2af0" stroke-width="1"/>
<line x1="441" y1="421.07" x2="496.3" y2="421.07" stroke="#c81e14" stroke-width="1"/>
<line x1="496.3" y1="421.07" x2="499.5" y2="424.67" stroke="#000" stroke-width="1"/>
<text x="474.6" y="425.07" font-size="4.3" fill="#000" textLength="20" lengthAdjust="spacingAndGlyphs" font-weight="bold">Bus2_D1</text>
<text x="413" y="429.57" font-size="5.5" fill="#2a2af0" textLength="22" lengthAdjust="spacingAndGlyphs">Key = B</text>
<text x="421" y="399.67" font-size="4.5" fill="#2a2af0" textLength="8" lengthAdjust="spacingAndGlyphs" font-weight="bold">J18</text>
<line x1="371.5" y1="436.64" x2="408" y2="436.64" stroke="#c81e14" stroke-width="1"/>
<rect x="370.5" y="435.64" width="2" height="2" fill="#c81e14"/>
<line x1="408" y1="436.64" x2="414" y2="436.64" stroke="#2a2af0" stroke-width="1"/>
<circle shape-rendering="geometricPrecision" cx="415.5" cy="436.64" r="1.4" fill="#fff" stroke="#2a2af0" stroke-width="0.8"/>
<line x1="356.5" y1="451.84" x2="408" y2="451.84" stroke="#c81e14" stroke-width="1"/>
<rect x="355.5" y="450.84" width="2" height="2" fill="#c81e14"/>
<line x1="408" y1="451.84" x2="414" y2="451.84" stroke="#2a2af0" stroke-width="1"/>
<circle shape-rendering="geometricPrecision" cx="415.5" cy="451.84" r="1.4" fill="#fff" stroke="#2a2af0" stroke-width="0.8"/>
<line x1="416.5" y1="437.64" x2="433.5" y2="451.34" stroke="#2a2af0" stroke-width="1"/>
<circle shape-rendering="geometricPrecision" cx="435" cy="451.84" r="1.4" fill="#fff" stroke="#2a2af0" stroke-width="0.8"/>
<line x1="436.5" y1="451.84" x2="441" y2="451.84" stroke="#2a2af0" stroke-width="1"/>
<line x1="441" y1="451.84" x2="496.3" y2="451.84" stroke="#c81e14" stroke-width="1"/>
<line x1="496.3" y1="451.84" x2="499.5" y2="455.44" stroke="#000" stroke-width="1"/>
<text x="474.6" y="455.84" font-size="4.3" fill="#000" textLength="20" lengthAdjust="spacingAndGlyphs" font-weight="bold">Bus2_D2</text>
<text x="413" y="460.34" font-size="5.5" fill="#2a2af0" textLength="22" lengthAdjust="spacingAndGlyphs">Key = C</text>
<text x="421" y="430.44" font-size="4.5" fill="#2a2af0" textLength="8" lengthAdjust="spacingAndGlyphs" font-weight="bold">J19</text>
<line x1="371.5" y1="467.41" x2="408" y2="467.41" stroke="#c81e14" stroke-width="1"/>
<rect x="370.5" y="466.41" width="2" height="2" fill="#c81e14"/>
<line x1="408" y1="467.41" x2="414" y2="467.41" stroke="#2a2af0" stroke-width="1"/>
<circle shape-rendering="geometricPrecision" cx="415.5" cy="467.41" r="1.4" fill="#fff" stroke="#2a2af0" stroke-width="0.8"/>
<line x1="356.5" y1="482.61" x2="408" y2="482.61" stroke="#c81e14" stroke-width="1"/>
<rect x="355.5" y="481.61" width="2" height="2" fill="#c81e14"/>
<line x1="408" y1="482.61" x2="414" y2="482.61" stroke="#2a2af0" stroke-width="1"/>
<circle shape-rendering="geometricPrecision" cx="415.5" cy="482.61" r="1.4" fill="#fff" stroke="#2a2af0" stroke-width="0.8"/>
<line x1="416.5" y1="468.41" x2="433.5" y2="482.11" stroke="#2a2af0" stroke-width="1"/>
<circle shape-rendering="geometricPrecision" cx="435" cy="482.61" r="1.4" fill="#fff" stroke="#2a2af0" stroke-width="0.8"/>
<line x1="436.5" y1="482.61" x2="441" y2="482.61" stroke="#2a2af0" stroke-width="1"/>
<line x1="441" y1="482.61" x2="496.3" y2="482.61" stroke="#c81e14" stroke-width="1"/>
<line x1="496.3" y1="482.61" x2="499.5" y2="486.21" stroke="#000" stroke-width="1"/>
<text x="474.6" y="486.61" font-size="4.3" fill="#000" textLength="20" lengthAdjust="spacingAndGlyphs" font-weight="bold">Bus2_D3</text>
<text x="413" y="491.11" font-size="5.5" fill="#2a2af0" textLength="22" lengthAdjust="spacingAndGlyphs">Key = D</text>
<text x="421" y="461.21" font-size="4.5" fill="#2a2af0" textLength="8" lengthAdjust="spacingAndGlyphs" font-weight="bold">J20</text>
<line x1="371.5" y1="498.18" x2="408" y2="498.18" stroke="#c81e14" stroke-width="1"/>
<rect x="370.5" y="497.18" width="2" height="2" fill="#c81e14"/>
<line x1="408" y1="498.18" x2="414" y2="498.18" stroke="#2a2af0" stroke-width="1"/>
<circle shape-rendering="geometricPrecision" cx="415.5" cy="498.18" r="1.4" fill="#fff" stroke="#2a2af0" stroke-width="0.8"/>
<line x1="356.5" y1="513.38" x2="408" y2="513.38" stroke="#c81e14" stroke-width="1"/>
<rect x="355.5" y="512.38" width="2" height="2" fill="#c81e14"/>
<line x1="408" y1="513.38" x2="414" y2="513.38" stroke="#2a2af0" stroke-width="1"/>
<circle shape-rendering="geometricPrecision" cx="415.5" cy="513.38" r="1.4" fill="#fff" stroke="#2a2af0" stroke-width="0.8"/>
<line x1="416.5" y1="499.18" x2="433.5" y2="512.88" stroke="#2a2af0" stroke-width="1"/>
<circle shape-rendering="geometricPrecision" cx="435" cy="513.38" r="1.4" fill="#fff" stroke="#2a2af0" stroke-width="0.8"/>
<line x1="436.5" y1="513.38" x2="441" y2="513.38" stroke="#2a2af0" stroke-width="1"/>
<line x1="441" y1="513.38" x2="496.3" y2="513.38" stroke="#c81e14" stroke-width="1"/>
<line x1="496.3" y1="513.38" x2="499.5" y2="516.98" stroke="#000" stroke-width="1"/>
<text x="474.6" y="517.38" font-size="4.3" fill="#000" textLength="20" lengthAdjust="spacingAndGlyphs" font-weight="bold">Bus2_D4</text>
<text x="413" y="521.88" font-size="5.5" fill="#2a2af0" textLength="22" lengthAdjust="spacingAndGlyphs">Key = E</text>
<text x="421" y="491.98" font-size="4.5" fill="#2a2af0" textLength="8" lengthAdjust="spacingAndGlyphs" font-weight="bold">J21</text>
<line x1="371.5" y1="528.95" x2="408" y2="528.95" stroke="#c81e14" stroke-width="1"/>
<rect x="370.5" y="527.95" width="2" height="2" fill="#c81e14"/>
<line x1="408" y1="528.95" x2="414" y2="528.95" stroke="#2a2af0" stroke-width="1"/>
<circle shape-rendering="geometricPrecision" cx="415.5" cy="528.95" r="1.4" fill="#fff" stroke="#2a2af0" stroke-width="0.8"/>
<line x1="356.5" y1="544.15" x2="408" y2="544.15" stroke="#c81e14" stroke-width="1"/>
<rect x="355.5" y="543.15" width="2" height="2" fill="#c81e14"/>
<line x1="408" y1="544.15" x2="414" y2="544.15" stroke="#2a2af0" stroke-width="1"/>
<circle shape-rendering="geometricPrecision" cx="415.5" cy="544.15" r="1.4" fill="#fff" stroke="#2a2af0" stroke-width="0.8"/>
<line x1="416.5" y1="529.95" x2="433.5" y2="543.65" stroke="#2a2af0" stroke-width="1"/>
<circle shape-rendering="geometricPrecision" cx="435" cy="544.15" r="1.4" fill="#fff" stroke="#2a2af0" stroke-width="0.8"/>
<line x1="436.5" y1="544.15" x2="441" y2="544.15" stroke="#2a2af0" stroke-width="1"/>
<line x1="441" y1="544.15" x2="496.3" y2="544.15" stroke="#c81e14" stroke-width="1"/>
<line x1="496.3" y1="544.15" x2="499.5" y2="547.75" stroke="#000" stroke-width="1"/>
<text x="474.6" y="548.15" font-size="4.3" fill="#000" textLength="20" lengthAdjust="spacingAndGlyphs" font-weight="bold">Bus2_D5</text>
<text x="413" y="552.65" font-size="5.5" fill="#2a2af0" textLength="22" lengthAdjust="spacingAndGlyphs">Key = F</text>
<text x="421" y="522.75" font-size="4.5" fill="#2a2af0" textLength="8" lengthAdjust="spacingAndGlyphs" font-weight="bold">J22</text>
<line x1="371.5" y1="559.72" x2="408" y2="559.72" stroke="#c81e14" stroke-width="1"/>
<rect x="370.5" y="558.72" width="2" height="2" fill="#c81e14"/>
<line x1="408" y1="559.72" x2="414" y2="559.72" stroke="#2a2af0" stroke-width="1"/>
<circle shape-rendering="geometricPrecision" cx="415.5" cy="559.72" r="1.4" fill="#fff" stroke="#2a2af0" stroke-width="0.8"/>
<line x1="356.5" y1="574.92" x2="408" y2="574.92" stroke="#c81e14" stroke-width="1"/>
<rect x="355.5" y="573.92" width="2" height="2" fill="#c81e14"/>
<line x1="408" y1="574.92" x2="414" y2="574.92" stroke="#2a2af0" stroke-width="1"/>
<circle shape-rendering="geometricPrecision" cx="415.5" cy="574.92" r="1.4" fill="#fff" stroke="#2a2af0" stroke-width="0.8"/>
<line x1="416.5" y1="560.72" x2="433.5" y2="574.42" stroke="#2a2af0" stroke-width="1"/>
<circle shape-rendering="geometricPrecision" cx="435" cy="574.92" r="1.4" fill="#fff" stroke="#2a2af0" stroke-width="0.8"/>
<line x1="436.5" y1="574.92" x2="441" y2="574.92" stroke="#2a2af0" stroke-width="1"/>
<line x1="441" y1="574.92" x2="496.3" y2="574.92" stroke="#c81e14" stroke-width="1"/>
<line x1="496.3" y1="574.92" x2="499.5" y2="578.52" stroke="#000" stroke-width="1"/>
<text x="474.6" y="578.92" font-size="4.3" fill="#000" textLength="20" lengthAdjust="spacingAndGlyphs" font-weight="bold">Bus2_D6</text>
<text x="413" y="583.42" font-size="5.5" fill="#2a2af0" textLength="22" lengthAdjust="spacingAndGlyphs">Key = G</text>
<text x="421" y="553.52" font-size="4.5" fill="#2a2af0" textLength="8" lengthAdjust="spacingAndGlyphs" font-weight="bold">J23</text>
<line x1="371.5" y1="590.49" x2="408" y2="590.49" stroke="#c81e14" stroke-width="1"/>
<rect x="370.5" y="589.49" width="2" height="2" fill="#c81e14"/>
<line x1="408" y1="590.49" x2="414" y2="590.49" stroke="#2a2af0" stroke-width="1"/>
<circle shape-rendering="geometricPrecision" cx="415.5" cy="590.49" r="1.4" fill="#fff" stroke="#2a2af0" stroke-width="0.8"/>
<line x1="356.5" y1="605.69" x2="408" y2="605.69" stroke="#c81e14" stroke-width="1"/>
<rect x="355.5" y="604.69" width="2" height="2" fill="#c81e14"/>
<line x1="408" y1="605.69" x2="414" y2="605.69" stroke="#2a2af0" stroke-width="1"/>
<circle shape-rendering="geometricPrecision" cx="415.5" cy="605.69" r="1.4" fill="#fff" stroke="#2a2af0" stroke-width="0.8"/>
<line x1="416.5" y1="591.49" x2="433.5" y2="605.19" stroke="#2a2af0" stroke-width="1"/>
<circle shape-rendering="geometricPrecision" cx="435" cy="605.69" r="1.4" fill="#fff" stroke="#2a2af0" stroke-width="0.8"/>
<line x1="436.5" y1="605.69" x2="441" y2="605.69" stroke="#2a2af0" stroke-width="1"/>
<line x1="441" y1="605.69" x2="496.3" y2="605.69" stroke="#c81e14" stroke-width="1"/>
<line x1="496.3" y1="605.69" x2="499.5" y2="609.29" stroke="#000" stroke-width="1"/>
<text x="474.6" y="609.69" font-size="4.3" fill="#000" textLength="20" lengthAdjust="spacingAndGlyphs" font-weight="bold">Bus2_D7</text>
<text x="413" y="614.19" font-size="5.5" fill="#2a2af0" textLength="22" lengthAdjust="spacingAndGlyphs">Key = H</text>
<text x="421" y="584.29" font-size="4.5" fill="#2a2af0" textLength="8" lengthAdjust="spacingAndGlyphs" font-weight="bold">J24</text>
<text x="341" y="621.5" font-size="5.5" fill="#000" textLength="70" lengthAdjust="spacingAndGlyphs" font-weight="bold">User Specified Value to load</text>
<rect x="546.5" y="344.3" width="40" height="66" fill="#fff" stroke="#2a2af0" stroke-width="1"/>
<text x="569" y="342.6" font-size="5.3" fill="#2020d8" textLength="9.6" lengthAdjust="spacingAndGlyphs" text-anchor="middle">U16</text>
<text x="555.6" y="417.9" font-size="5.3" fill="#2020d8" textLength="25.5" lengthAdjust="spacingAndGlyphs">74LS190N</text>
<line x1="499.5" y1="358.5" x2="504" y2="354.5" stroke="#000" stroke-width="1"/>
<line x1="504" y1="354.5" x2="536" y2="354.5" stroke="#c81e14" stroke-width="1"/>
<line x1="536" y1="354.5" x2="546.5" y2="354.5" stroke="#2a2af0" stroke-width="1"/>
<text x="505.3" y="358.4" font-size="4.3" fill="#000" textLength="20.3" lengthAdjust="spacingAndGlyphs" font-weight="bold">Bus2_D0</text>
<text x="549.8" y="354.3" font-size="4.3" fill="#2020d8" font-weight="bold">A</text>
<line x1="586.5" y1="354.5" x2="597" y2="354.5" stroke="#2a2af0" stroke-width="1"/>
<line x1="597" y1="354.5" x2="634" y2="354.5" stroke="#c81e14" stroke-width="1"/>
<line x1="634" y1="354.5" x2="637.7" y2="350.5" stroke="#000" stroke-width="1"/>
<text x="617" y="358.4" font-size="4.3" fill="#000" textLength="16.5" lengthAdjust="spacingAndGlyphs" font-weight="bold">Bus_QA</text>
<text x="574.5" y="354.3" font-size="4.3" fill="#2020d8" textLength="6" lengthAdjust="spacingAndGlyphs" font-weight="bold">QA</text>
<line x1="499.5" y1="363.6" x2="504" y2="359.6" stroke="#000" stroke-width="1"/>
<line x1="504" y1="359.6" x2="536" y2="359.6" stroke="#c81e14" stroke-width="1"/>
<line x1="536" y1="359.6" x2="546.5" y2="359.6" stroke="#2a2af0" stroke-width="1"/>
<text x="505.3" y="363.5" font-size="4.3" fill="#000" textLength="20.3" lengthAdjust="spacingAndGlyphs" font-weight="bold">Bus2_D1</text>
<text x="549.8" y="359.4" font-size="4.3" fill="#2020d8" font-weight="bold">B</text>
<line x1="586.5" y1="359.6" x2="597" y2="359.6" stroke="#2a2af0" stroke-width="1"/>
<line x1="597" y1="359.6" x2="634" y2="359.6" stroke="#c81e14" stroke-width="1"/>
<line x1="634" y1="359.6" x2="637.7" y2="355.6" stroke="#000" stroke-width="1"/>
<text x="617" y="363.5" font-size="4.3" fill="#000" textLength="16.5" lengthAdjust="spacingAndGlyphs" font-weight="bold">Bus_QB</text>
<text x="574.5" y="359.4" font-size="4.3" fill="#2020d8" textLength="6" lengthAdjust="spacingAndGlyphs" font-weight="bold">QB</text>
<line x1="499.5" y1="368.7" x2="504" y2="364.7" stroke="#000" stroke-width="1"/>
<line x1="504" y1="364.7" x2="536" y2="364.7" stroke="#c81e14" stroke-width="1"/>
<line x1="536" y1="364.7" x2="546.5" y2="364.7" stroke="#2a2af0" stroke-width="1"/>
<text x="505.3" y="368.6" font-size="4.3" fill="#000" textLength="20.3" lengthAdjust="spacingAndGlyphs" font-weight="bold">Bus2_D2</text>
<text x="549.8" y="364.5" font-size="4.3" fill="#2020d8" font-weight="bold">C</text>
<line x1="586.5" y1="364.7" x2="597" y2="364.7" stroke="#2a2af0" stroke-width="1"/>
<line x1="597" y1="364.7" x2="634" y2="364.7" stroke="#c81e14" stroke-width="1"/>
<line x1="634" y1="364.7" x2="637.7" y2="360.7" stroke="#000" stroke-width="1"/>
<text x="617" y="368.6" font-size="4.3" fill="#000" textLength="16.5" lengthAdjust="spacingAndGlyphs" font-weight="bold">Bus_QC</text>
<text x="574.5" y="364.5" font-size="4.3" fill="#2020d8" textLength="6" lengthAdjust="spacingAndGlyphs" font-weight="bold">QC</text>
<line x1="499.5" y1="373.8" x2="504" y2="369.8" stroke="#000" stroke-width="1"/>
<line x1="504" y1="369.8" x2="536" y2="369.8" stroke="#c81e14" stroke-width="1"/>
<line x1="536" y1="369.8" x2="546.5" y2="369.8" stroke="#2a2af0" stroke-width="1"/>
<text x="505.3" y="373.7" font-size="4.3" fill="#000" textLength="20.3" lengthAdjust="spacingAndGlyphs" font-weight="bold">Bus2_D3</text>
<text x="549.8" y="369.6" font-size="4.3" fill="#2020d8" font-weight="bold">D</text>
<line x1="586.5" y1="369.8" x2="597" y2="369.8" stroke="#2a2af0" stroke-width="1"/>
<line x1="597" y1="369.8" x2="634" y2="369.8" stroke="#c81e14" stroke-width="1"/>
<line x1="634" y1="369.8" x2="637.7" y2="365.8" stroke="#000" stroke-width="1"/>
<text x="617" y="373.7" font-size="4.3" fill="#000" textLength="16.5" lengthAdjust="spacingAndGlyphs" font-weight="bold">Bus_QD</text>
<text x="574.5" y="369.6" font-size="4.3" fill="#2020d8" textLength="6" lengthAdjust="spacingAndGlyphs" font-weight="bold">QD</text>
<line x1="499.5" y1="384" x2="504" y2="380" stroke="#000" stroke-width="1"/>
<line x1="504" y1="380" x2="536" y2="380" stroke="#c81e14" stroke-width="1"/>
<line x1="536" y1="380" x2="543.5" y2="380" stroke="#2a2af0" stroke-width="1"/>
<circle shape-rendering="geometricPrecision" cx="545" cy="380" r="1.3" fill="#fff" stroke="#2a2af0" stroke-width="0.8"/>
<text x="505.3" y="383.9" font-size="4.3" fill="#000" textLength="20.3" lengthAdjust="spacingAndGlyphs" font-weight="bold">Bus2_EN</text>
<text x="550" y="380.5" font-size="4.3" fill="#2020d8" textLength="13.5" lengthAdjust="spacingAndGlyphs" font-weight="bold">~CTEN</text>
<line x1="499.5" y1="389.1" x2="504" y2="385.1" stroke="#000" stroke-width="1"/>
<line x1="504" y1="385.1" x2="536" y2="385.1" stroke="#c81e14" stroke-width="1"/>
<line x1="536" y1="385.1" x2="543.5" y2="385.1" stroke="#2a2af0" stroke-width="1"/>
<circle shape-rendering="geometricPrecision" cx="545" cy="385.1" r="1.3" fill="#fff" stroke="#2a2af0" stroke-width="0.8"/>
<text x="505.3" y="389" font-size="4.3" fill="#000" textLength="20.3" lengthAdjust="spacingAndGlyphs" font-weight="bold">Bus2_LD</text>
<text x="550" y="385.6" font-size="4.3" fill="#2020d8" textLength="13.5" lengthAdjust="spacingAndGlyphs" font-weight="bold">~LOAD</text>
<line x1="499.5" y1="394.2" x2="504" y2="390.2" stroke="#000" stroke-width="1"/>
<line x1="504" y1="390.2" x2="536" y2="390.2" stroke="#c81e14" stroke-width="1"/>
<line x1="536" y1="390.2" x2="543.5" y2="390.2" stroke="#2a2af0" stroke-width="1"/>
<circle shape-rendering="geometricPrecision" cx="545" cy="390.2" r="1.3" fill="#fff" stroke="#2a2af0" stroke-width="0.8"/>
<text x="505.3" y="394.1" font-size="4.3" fill="#000" textLength="20.3" lengthAdjust="spacingAndGlyphs" font-weight="bold">Bus2_UD</text>
<text x="550" y="390.7" font-size="4.3" fill="#2020d8" textLength="11" lengthAdjust="spacingAndGlyphs" font-weight="bold">~U/D</text>
<text x="565.5" y="390.7" font-size="4.3" fill="#2020d8" textLength="11.5" lengthAdjust="spacingAndGlyphs" font-weight="bold">~RCO</text>
<text x="554" y="396" font-size="4.3" fill="#2020d8" textLength="20" lengthAdjust="spacingAndGlyphs" font-weight="bold">MAX/MIN</text>
<text x="551" y="401.2" font-size="4.3" fill="#2020d8" textLength="8.5" lengthAdjust="spacingAndGlyphs" font-weight="bold">CLK</text>
<polyline points="546.5,398.4 549,400.4 546.5,402.4" fill="none" stroke="#2a2af0" stroke-width="0.8"/>
<circle shape-rendering="geometricPrecision" cx="588.3" cy="390.2" r="1.3" fill="#fff" stroke="#2a2af0" stroke-width="0.8"/>
<line x1="589.8" y1="390.2" x2="596.5" y2="390.2" stroke="#2a2af0" stroke-width="1"/>
<line x1="586.5" y1="395.3" x2="596.5" y2="395.3" stroke="#2a2af0" stroke-width="1"/>
<line x1="499.5" y1="404.4" x2="504" y2="400.4" stroke="#000" stroke-width="1"/>
<line x1="504" y1="400.4" x2="536" y2="400.4" stroke="#c81e14" stroke-width="1"/>
<line x1="536" y1="400.4" x2="546.5" y2="400.4" stroke="#2a2af0" stroke-width="1"/>
<text x="505.3" y="404.6" font-size="4.3" fill="#000" textLength="23" lengthAdjust="spacingAndGlyphs" font-weight="bold">Bus2_CLK</text>
<rect x="546.5" y="534.7" width="40" height="64.6" fill="#fff" stroke="#2a2af0" stroke-width="1"/>
<text x="569" y="533" font-size="5.3" fill="#2020d8" textLength="9.6" lengthAdjust="spacingAndGlyphs" text-anchor="middle">U17</text>
<text x="555.6" y="606.9" font-size="5.3" fill="#2020d8" textLength="25.5" lengthAdjust="spacingAndGlyphs">74LS190N</text>
<line x1="499.5" y1="540.2" x2="504" y2="544.2" stroke="#000" stroke-width="1"/>
<line x1="504" y1="544.2" x2="536" y2="544.2" stroke="#c81e14" stroke-width="1"/>
<line x1="536" y1="544.2" x2="546.5" y2="544.2" stroke="#2a2af0" stroke-width="1"/>
<text x="505.3" y="543.7" font-size="4.3" fill="#000" textLength="20.3" lengthAdjust="spacingAndGlyphs" font-weight="bold">Bus2_D4</text>
<text x="549.8" y="544" font-size="4.3" fill="#2020d8" font-weight="bold">A</text>
<line x1="586.5" y1="544.2" x2="597" y2="544.2" stroke="#2a2af0" stroke-width="1"/>
<line x1="597" y1="544.2" x2="634" y2="544.2" stroke="#c81e14" stroke-width="1"/>
<line x1="634" y1="544.2" x2="637.7" y2="540.2" stroke="#000" stroke-width="1"/>
<text x="617" y="543.7" font-size="4.3" fill="#000" textLength="16.5" lengthAdjust="spacingAndGlyphs" font-weight="bold">Bus_QE</text>
<text x="574.5" y="544" font-size="4.3" fill="#2020d8" textLength="6" lengthAdjust="spacingAndGlyphs" font-weight="bold">QA</text>
<line x1="499.5" y1="545.2" x2="504" y2="549.2" stroke="#000" stroke-width="1"/>
<line x1="504" y1="549.2" x2="536" y2="549.2" stroke="#c81e14" stroke-width="1"/>
<line x1="536" y1="549.2" x2="546.5" y2="549.2" stroke="#2a2af0" stroke-width="1"/>
<text x="505.3" y="548.7" font-size="4.3" fill="#000" textLength="20.3" lengthAdjust="spacingAndGlyphs" font-weight="bold">Bus2_D5</text>
<text x="549.8" y="549" font-size="4.3" fill="#2020d8" font-weight="bold">B</text>
<line x1="586.5" y1="549.2" x2="597" y2="549.2" stroke="#2a2af0" stroke-width="1"/>
<line x1="597" y1="549.2" x2="634" y2="549.2" stroke="#c81e14" stroke-width="1"/>
<line x1="634" y1="549.2" x2="637.7" y2="545.2" stroke="#000" stroke-width="1"/>
<text x="617" y="548.7" font-size="4.3" fill="#000" textLength="16.5" lengthAdjust="spacingAndGlyphs" font-weight="bold">Bus_QF</text>
<text x="574.5" y="549" font-size="4.3" fill="#2020d8" textLength="6" lengthAdjust="spacingAndGlyphs" font-weight="bold">QB</text>
<line x1="499.5" y1="550.2" x2="504" y2="554.2" stroke="#000" stroke-width="1"/>
<line x1="504" y1="554.2" x2="536" y2="554.2" stroke="#c81e14" stroke-width="1"/>
<line x1="536" y1="554.2" x2="546.5" y2="554.2" stroke="#2a2af0" stroke-width="1"/>
<text x="505.3" y="553.7" font-size="4.3" fill="#000" textLength="20.3" lengthAdjust="spacingAndGlyphs" font-weight="bold">Bus2_D6</text>
<text x="549.8" y="554" font-size="4.3" fill="#2020d8" font-weight="bold">C</text>
<line x1="586.5" y1="554.2" x2="597" y2="554.2" stroke="#2a2af0" stroke-width="1"/>
<line x1="597" y1="554.2" x2="634" y2="554.2" stroke="#c81e14" stroke-width="1"/>
<line x1="634" y1="554.2" x2="637.7" y2="550.2" stroke="#000" stroke-width="1"/>
<text x="617" y="553.7" font-size="4.3" fill="#000" textLength="16.5" lengthAdjust="spacingAndGlyphs" font-weight="bold">Bus_QG</text>
<text x="574.5" y="554" font-size="4.3" fill="#2020d8" textLength="6" lengthAdjust="spacingAndGlyphs" font-weight="bold">QC</text>
<line x1="499.5" y1="555.2" x2="504" y2="559.2" stroke="#000" stroke-width="1"/>
<line x1="504" y1="559.2" x2="536" y2="559.2" stroke="#c81e14" stroke-width="1"/>
<line x1="536" y1="559.2" x2="546.5" y2="559.2" stroke="#2a2af0" stroke-width="1"/>
<text x="505.3" y="558.7" font-size="4.3" fill="#000" textLength="20.3" lengthAdjust="spacingAndGlyphs" font-weight="bold">Bus2_D7</text>
<text x="549.8" y="559" font-size="4.3" fill="#2020d8" font-weight="bold">D</text>
<line x1="586.5" y1="559.2" x2="597" y2="559.2" stroke="#2a2af0" stroke-width="1"/>
<line x1="597" y1="559.2" x2="634" y2="559.2" stroke="#c81e14" stroke-width="1"/>
<line x1="634" y1="559.2" x2="637.7" y2="555.2" stroke="#000" stroke-width="1"/>
<text x="617" y="558.7" font-size="4.3" fill="#000" textLength="16.5" lengthAdjust="spacingAndGlyphs" font-weight="bold">Bus_QH</text>
<text x="574.5" y="559" font-size="4.3" fill="#2020d8" textLength="6" lengthAdjust="spacingAndGlyphs" font-weight="bold">QD</text>
<line x1="499.5" y1="566" x2="504" y2="570" stroke="#000" stroke-width="1"/>
<line x1="504" y1="570" x2="536" y2="570" stroke="#c81e14" stroke-width="1"/>
<line x1="536" y1="570" x2="543.5" y2="570" stroke="#2a2af0" stroke-width="1"/>
<circle shape-rendering="geometricPrecision" cx="545" cy="570" r="1.3" fill="#fff" stroke="#2a2af0" stroke-width="0.8"/>
<text x="505.3" y="569.5" font-size="4.3" fill="#000" textLength="20.3" lengthAdjust="spacingAndGlyphs" font-weight="bold">Bus2_EN</text>
<text x="550" y="570.5" font-size="4.3" fill="#2020d8" textLength="13.5" lengthAdjust="spacingAndGlyphs" font-weight="bold">~CTEN</text>
<line x1="499.5" y1="571" x2="504" y2="575" stroke="#000" stroke-width="1"/>
<line x1="504" y1="575" x2="536" y2="575" stroke="#c81e14" stroke-width="1"/>
<line x1="536" y1="575" x2="543.5" y2="575" stroke="#2a2af0" stroke-width="1"/>
<circle shape-rendering="geometricPrecision" cx="545" cy="575" r="1.3" fill="#fff" stroke="#2a2af0" stroke-width="0.8"/>
<text x="505.3" y="574.5" font-size="4.3" fill="#000" textLength="20.3" lengthAdjust="spacingAndGlyphs" font-weight="bold">Bus2_LD</text>
<text x="550" y="575.5" font-size="4.3" fill="#2020d8" textLength="13.5" lengthAdjust="spacingAndGlyphs" font-weight="bold">~LOAD</text>
<line x1="499.5" y1="576.1" x2="504" y2="580.1" stroke="#000" stroke-width="1"/>
<line x1="504" y1="580.1" x2="536" y2="580.1" stroke="#c81e14" stroke-width="1"/>
<line x1="536" y1="580.1" x2="543.5" y2="580.1" stroke="#2a2af0" stroke-width="1"/>
<circle shape-rendering="geometricPrecision" cx="545" cy="580.1" r="1.3" fill="#fff" stroke="#2a2af0" stroke-width="0.8"/>
<text x="505.3" y="579.6" font-size="4.3" fill="#000" textLength="20.3" lengthAdjust="spacingAndGlyphs" font-weight="bold">Bus2_UD</text>
<text x="550" y="580.6" font-size="4.3" fill="#2020d8" textLength="11" lengthAdjust="spacingAndGlyphs" font-weight="bold">~U/D</text>
<text x="565.5" y="580.6" font-size="4.3" fill="#2020d8" textLength="11.5" lengthAdjust="spacingAndGlyphs" font-weight="bold">~RCO</text>
<text x="554" y="585.8" font-size="4.3" fill="#2020d8" textLength="20" lengthAdjust="spacingAndGlyphs" font-weight="bold">MAX/MIN</text>
<text x="551" y="591" font-size="4.3" fill="#2020d8" textLength="8.5" lengthAdjust="spacingAndGlyphs" font-weight="bold">CLK</text>
<polyline points="546.5,588.2 549,590.2 546.5,592.2" fill="none" stroke="#2a2af0" stroke-width="0.8"/>
<circle shape-rendering="geometricPrecision" cx="588.3" cy="580.1" r="1.3" fill="#fff" stroke="#2a2af0" stroke-width="0.8"/>
<line x1="589.8" y1="580.1" x2="596.5" y2="580.1" stroke="#2a2af0" stroke-width="1"/>
<line x1="586.5" y1="585.1" x2="596.5" y2="585.1" stroke="#2a2af0" stroke-width="1"/>
<polyline points="598,390.2 603,390.2 603,477 530.9,477 530.9,590.2 536,590.2" fill="none" stroke="#c81e14" stroke-width="1"/>
<line x1="536" y1="590.2" x2="546.5" y2="590.2" stroke="#2a2af0" stroke-width="1"/>
<rect x="700.6" y="436.4" width="40.4" height="56" fill="#fff" stroke="#2a2af0" stroke-width="1"/>
<text x="723" y="434.5" font-size="5.3" fill="#2020d8" textLength="9.6" lengthAdjust="spacingAndGlyphs" text-anchor="middle">U18</text>
<text x="709" y="499.7" font-size="5.3" fill="#2020d8" textLength="26" lengthAdjust="spacingAndGlyphs">74LS138N</text>
<line x1="638.5" y1="450.6" x2="643" y2="446.6" stroke="#000" stroke-width="1"/>
<line x1="643" y1="446.6" x2="691.5" y2="446.6" stroke="#c81e14" stroke-width="1"/>
<line x1="691.5" y1="446.6" x2="696.5" y2="446.6" stroke="#2a2af0" stroke-width="1"/>
<circle shape-rendering="geometricPrecision" cx="698" cy="446.6" r="1.3" fill="#fff" stroke="#2a2af0" stroke-width="0.8"/>
<text x="643.8" y="450.8" font-size="4.3" fill="#000" textLength="29.8" lengthAdjust="spacingAndGlyphs" font-weight="bold">BUS_CNTRL1</text>
<text x="709" y="445.8" font-size="4.3" fill="#2020d8" textLength="6.5" lengthAdjust="spacingAndGlyphs" font-weight="bold">Y0</text>
<line x1="638.5" y1="455.75" x2="643" y2="451.75" stroke="#000" stroke-width="1"/>
<line x1="643" y1="451.75" x2="691.5" y2="451.75" stroke="#c81e14" stroke-width="1"/>
<line x1="691.5" y1="451.75" x2="696.5" y2="451.75" stroke="#2a2af0" stroke-width="1"/>
<circle shape-rendering="geometricPrecision" cx="698" cy="451.75" r="1.3" fill="#fff" stroke="#2a2af0" stroke-width="0.8"/>
<text x="643.8" y="455.95" font-size="4.3" fill="#000" textLength="29.8" lengthAdjust="spacingAndGlyphs" font-weight="bold">BUS_CNTRL2</text>
<text x="709" y="450.95" font-size="4.3" fill="#2020d8" textLength="6.5" lengthAdjust="spacingAndGlyphs" font-weight="bold">Y1</text>
<line x1="638.5" y1="460.9" x2="643" y2="456.9" stroke="#000" stroke-width="1"/>
<line x1="643" y1="456.9" x2="691.5" y2="456.9" stroke="#c81e14" stroke-width="1"/>
<line x1="691.5" y1="456.9" x2="696.5" y2="456.9" stroke="#2a2af0" stroke-width="1"/>
<circle shape-rendering="geometricPrecision" cx="698" cy="456.9" r="1.3" fill="#fff" stroke="#2a2af0" stroke-width="0.8"/>
<text x="643.8" y="461.1" font-size="4.3" fill="#000" textLength="29.8" lengthAdjust="spacingAndGlyphs" font-weight="bold">BUS_CNTRL3</text>
<text x="709" y="456.1" font-size="4.3" fill="#2020d8" textLength="6.5" lengthAdjust="spacingAndGlyphs" font-weight="bold">Y2</text>
<line x1="638.5" y1="466.05" x2="643" y2="462.05" stroke="#000" stroke-width="1"/>
<line x1="643" y1="462.05" x2="691.5" y2="462.05" stroke="#c81e14" stroke-width="1"/>
<line x1="691.5" y1="462.05" x2="696.5" y2="462.05" stroke="#2a2af0" stroke-width="1"/>
<circle shape-rendering="geometricPrecision" cx="698" cy="462.05" r="1.3" fill="#fff" stroke="#2a2af0" stroke-width="0.8"/>
<text x="643.8" y="466.25" font-size="4.3" fill="#000" textLength="29.8" lengthAdjust="spacingAndGlyphs" font-weight="bold">BUS_CNTRL4</text>
<text x="709" y="461.25" font-size="4.3" fill="#2020d8" textLength="6.5" lengthAdjust="spacingAndGlyphs" font-weight="bold">Y3</text>
<line x1="638.5" y1="471.2" x2="643" y2="467.2" stroke="#000" stroke-width="1"/>
<line x1="643" y1="467.2" x2="691.5" y2="467.2" stroke="#c81e14" stroke-width="1"/>
<line x1="691.5" y1="467.2" x2="696.5" y2="467.2" stroke="#2a2af0" stroke-width="1"/>
<circle shape-rendering="geometricPrecision" cx="698" cy="467.2" r="1.3" fill="#fff" stroke="#2a2af0" stroke-width="0.8"/>
<text x="643.8" y="471.4" font-size="4.3" fill="#000" textLength="29.8" lengthAdjust="spacingAndGlyphs" font-weight="bold">BUS_CNTRL5</text>
<text x="709" y="466.4" font-size="4.3" fill="#2020d8" textLength="6.5" lengthAdjust="spacingAndGlyphs" font-weight="bold">Y4</text>
<line x1="638.5" y1="476.35" x2="643" y2="472.35" stroke="#000" stroke-width="1"/>
<line x1="643" y1="472.35" x2="691.5" y2="472.35" stroke="#c81e14" stroke-width="1"/>
<line x1="691.5" y1="472.35" x2="696.5" y2="472.35" stroke="#2a2af0" stroke-width="1"/>
<circle shape-rendering="geometricPrecision" cx="698" cy="472.35" r="1.3" fill="#fff" stroke="#2a2af0" stroke-width="0.8"/>
<text x="643.8" y="476.55" font-size="4.3" fill="#000" textLength="29.8" lengthAdjust="spacingAndGlyphs" font-weight="bold">BUS_CNTRL6</text>
<text x="709" y="471.55" font-size="4.3" fill="#2020d8" textLength="6.5" lengthAdjust="spacingAndGlyphs" font-weight="bold">Y5</text>
<line x1="638.5" y1="481.5" x2="643" y2="477.5" stroke="#000" stroke-width="1"/>
<line x1="643" y1="477.5" x2="691.5" y2="477.5" stroke="#c81e14" stroke-width="1"/>
<line x1="691.5" y1="477.5" x2="696.5" y2="477.5" stroke="#2a2af0" stroke-width="1"/>
<circle shape-rendering="geometricPrecision" cx="698" cy="477.5" r="1.3" fill="#fff" stroke="#2a2af0" stroke-width="0.8"/>
<text x="643.8" y="481.7" font-size="4.3" fill="#000" textLength="29.8" lengthAdjust="spacingAndGlyphs" font-weight="bold">BUS_CNTRL7</text>
<text x="709" y="476.7" font-size="4.3" fill="#2020d8" textLength="6.5" lengthAdjust="spacingAndGlyphs" font-weight="bold">Y6</text>
<line x1="638.5" y1="486.65" x2="643" y2="482.65" stroke="#000" stroke-width="1"/>
<line x1="643" y1="482.65" x2="691.5" y2="482.65" stroke="#c81e14" stroke-width="1"/>
<line x1="691.5" y1="482.65" x2="696.5" y2="482.65" stroke="#2a2af0" stroke-width="1"/>
<circle shape-rendering="geometricPrecision" cx="698" cy="482.65" r="1.3" fill="#fff" stroke="#2a2af0" stroke-width="0.8"/>
<text x="643.8" y="486.85" font-size="4.3" fill="#000" textLength="29.8" lengthAdjust="spacingAndGlyphs" font-weight="bold">BUS_CNTRL8</text>
<text x="709" y="481.85" font-size="4.3" fill="#2020d8" textLength="6.5" lengthAdjust="spacingAndGlyphs" font-weight="bold">Y7</text>
<text x="648" y="466.8" font-size="5.5" fill="#000" textLength="9.6" lengthAdjust="spacingAndGlyphs" font-weight="bold">Bus</text>
<line x1="741" y1="446.6" x2="752" y2="446.6" stroke="#2a2af0" stroke-width="1"/>
<text x="735.6" y="445.8" font-size="4.3" fill="#2020d8" font-weight="bold">A</text>
<line x1="741" y1="451.9" x2="752" y2="451.9" stroke="#2a2af0" stroke-width="1"/>
<text x="735.6" y="451.1" font-size="4.3" fill="#2020d8" font-weight="bold">B</text>
<line x1="741" y1="457.2" x2="752" y2="457.2" stroke="#2a2af0" stroke-width="1"/>
<text x="735.6" y="456.4" font-size="4.3" fill="#2020d8" font-weight="bold">C</text>
<line x1="752" y1="446.6" x2="784" y2="446.6" stroke="#c81e14" stroke-width="1"/>
<line x1="784" y1="446.6" x2="787" y2="443.1" stroke="#000" stroke-width="1"/>
<text x="754" y="450.8" font-size="4.3" fill="#000" textLength="29" lengthAdjust="spacingAndGlyphs" font-weight="bold">Bus2_DSP1/2</text>
<line x1="752" y1="451.9" x2="784" y2="451.9" stroke="#c81e14" stroke-width="1"/>
<line x1="784" y1="451.9" x2="787" y2="448.4" stroke="#000" stroke-width="1"/>
<text x="759" y="456.1" font-size="4.3" fill="#000" textLength="23.6" lengthAdjust="spacingAndGlyphs" font-weight="bold">Bus2_mux</text>
<polyline points="752,457.2 766,457.2 766,506" fill="none" stroke="#c81e14" stroke-width="1"/>
<rect x="765" y="456.2" width="2" height="2" fill="#c81e14"/>
<text x="731.6" y="466.6" font-size="4.3" fill="#2020d8" textLength="6.4" lengthAdjust="spacingAndGlyphs" font-weight="bold">G1</text>
<line x1="741" y1="467.2" x2="752" y2="467.2" stroke="#2a2af0" stroke-width="1"/>
<polyline points="752,467.2 782.6,467.2 782.6,451.9" fill="none" stroke="#c81e14" stroke-width="1"/>
<text x="726" y="472.1" font-size="4.3" fill="#2020d8" textLength="12.6" lengthAdjust="spacingAndGlyphs" font-weight="bold">~G2A</text>
<circle shape-rendering="geometricPrecision" cx="742.3" cy="472.3" r="1.3" fill="#fff" stroke="#2a2af0" stroke-width="0.8"/>
<line x1="743.8" y1="472.3" x2="752" y2="472.3" stroke="#2a2af0" stroke-width="1"/>
<line x1="752" y1="472.3" x2="766" y2="472.3" stroke="#c81e14" stroke-width="1"/>
<rect x="765" y="471.3" width="2" height="2" fill="#c81e14"/>
<text x="726" y="477.2" font-size="4.3" fill="#2020d8" textLength="12.6" lengthAdjust="spacingAndGlyphs" font-weight="bold">~G2B</text>
<circle shape-rendering="geometricPrecision" cx="742.3" cy="477.4" r="1.3" fill="#fff" stroke="#2a2af0" stroke-width="0.8"/>
<line x1="743.8" y1="477.4" x2="752" y2="477.4" stroke="#2a2af0" stroke-width="1"/>
<line x1="752" y1="477.4" x2="766" y2="477.4" stroke="#c81e14" stroke-width="1"/>
<rect x="765" y="476.4" width="2" height="2" fill="#c81e14"/>
<line x1="761.3" y1="507" x2="771.3" y2="507" stroke="#000" stroke-width="1.4"/>
<line x1="763.5" y1="509.7" x2="769" y2="509.7" stroke="#000" stroke-width="1"/>
<line x1="765" y1="511.8" x2="767.3" y2="511.8" stroke="#000" stroke-width="1"/>
<line x1="787" y1="426" x2="787" y2="467.2" stroke="#000" stroke-width="2"/>
<text x="798" y="442" font-size="5.5" fill="#000" textLength="14.5" lengthAdjust="spacingAndGlyphs" font-weight="bold">Bus2</text></svg>
<div class="a " style="left:204px;top:662px;width:65px;height:20px;border:1px solid;border-top:none;border-color:#fff #404040 #404040 #fff;border-radius:0 0 3px 3px;box-shadow:inset -1px -1px 0 #808080;background:#d4d0c8;"></div>
<div class="a " style="left:201px;top:661px;width:709px;height:1px;background:#404040"></div>
<div class="a " style="left:269px;top:661px;width:105px;height:23px;border:1px solid;border-top:none;border-color:#fff #404040 #404040 #fff;border-radius:0 0 3px 3px;box-shadow:inset -1px -1px 0 #808080;background:#d4d0c8;"></div>
<div class="a " style="left:270px;top:661px;width:103px;height:1px;background:#d4d0c8"></div>
<svg class="a" style="left:207.5px;top:664px" width="16" height="16" viewBox="0 0 16 16" ><path d="M0.5 0.5H10.5L15.5 5.5V15.5H0.5Z" stroke="#000" fill="#fff" stroke-width="1.2" /><path d="M10.5 0.5V5.5H15.5" stroke="#000" fill="none" stroke-width="1.2" /><path d="M2.5 4V13.5M2.5 4.5H5M9 4V10.5H6.5M2 14.5L4 12.5" stroke="#e00000" fill="none" stroke-width="1" /><path d="M4.5 2.5V6.5H6Q8.5 4.5 6 2.5Z" stroke="#000" fill="#fff" stroke-width="1" /><path d="M4.5 9.5L7.5 12.5M7.5 9.5L4.5 12.5M3.5 11H8" stroke="#000" fill="none" stroke-width="1" /></svg>
<svg class="a" style="left:273.5px;top:665.5px" width="16" height="16" viewBox="0 0 16 16" ><path d="M0.5 0.5H10.5L15.5 5.5V15.5H0.5Z" stroke="#000" fill="#fff" stroke-width="1.2" /><path d="M10.5 0.5V5.5H15.5" stroke="#000" fill="none" stroke-width="1.2" /><path d="M2.5 4V13.5M2.5 4.5H5M9 4V10.5H6.5M2 14.5L4 12.5" stroke="#e00000" fill="none" stroke-width="1" /><path d="M4.5 2.5V6.5H6Q8.5 4.5 6 2.5Z" stroke="#000" fill="#fff" stroke-width="1" /><path d="M4.5 9.5L7.5 12.5M7.5 9.5L4.5 12.5M3.5 11H8" stroke="#000" fill="none" stroke-width="1" /></svg>
<div class="t" style="left:228px;top:667.13px;font-size:11.3px;line-height:11.3px;letter-spacing:-0.038px;">Circuit1</div>
<div class="t" style="left:292.5px;top:668.43px;font-size:11.3px;line-height:11.3px;letter-spacing:-0.358px;">DecimalCounter</div>
<div class="a " style="left:877px;top:667px;width:15px;height:15px;border:1px solid;border-color:#fff #404040 #404040 #fff;"></div>
<svg class="a" style="left:882px;top:670.5px" width="5" height="8" viewBox="0 0 5 8" ><path d="M4.5 0V8L0.5 4Z" stroke="#000080" fill="#000080" stroke-width="0.2" /></svg>
<div class="a " style="left:892px;top:667px;width:15px;height:15px;border:1px solid;border-color:#fff #404040 #404040 #fff;"></div>
<svg class="a" style="left:898px;top:670.5px" width="5" height="8" viewBox="0 0 5 8" ><path d="M0.5 0V8L4.5 4Z" stroke="#000080" fill="#000080" stroke-width="0.2" /></svg>
<div class="a " style="left:910px;top:160px;width:27px;height:1px;background:#808080"></div>
<div class="a tb" style="left:910px;top:161px;width:27px;height:517px;"></div>
<div class="a " style="left:911px;top:162px;width:25px;height:1px;background:#fff"></div>
<div class="a " style="left:912px;top:165px;width:23px;height:3px;border:1px solid;border-color:#fff #808080 #808080 #fff;"></div>
<div class="a " style="left:912px;top:169px;width:23px;height:3px;border:1px solid;border-color:#fff #808080 #808080 #fff;"></div>
<svg class="a" style="left:914px;top:177px" width="17" height="15" viewBox="0 0 17 15" ><g transform="translate(1,1)"><rect x="3.5" y="0.5" width="8" height="11" fill="none" stroke="#fff" stroke-width="1"/><rect x="4" y="1" width="7" height="3" fill="#fff" /><circle cx="7.5" cy="8" r="2" fill="none" stroke="#fff"/><path d="M1.5 1V11M13.5 1V11M0 12.5H15" stroke="#fff" fill="none" stroke-width="1" /></g><rect x="3.5" y="0.5" width="8" height="11" fill="none" stroke="#808080" stroke-width="1"/><rect x="4" y="1" width="7" height="3" fill="#808080" /><circle cx="7.5" cy="8" r="2" fill="none" stroke="#808080"/><path d="M1.5 1V11M13.5 1V11M0 12.5H15" stroke="#808080" fill="none" stroke-width="1" /></svg>
<svg class="a" style="left:914px;top:199px" width="17" height="15" viewBox="0 0 17 15" ><g transform="translate(1,1)"><rect x="1" y="0" width="14" height="7" fill="#fff" /><path d="M1.5 7V12.5H15M14.5 7V12.5" stroke="#fff" fill="none" stroke-width="1" /><path d="M3 9.5H11" stroke="#fff" fill="none" stroke-width="1" stroke-dasharray="1 2"/><circle cx="11.5" cy="10.5" r="1" fill="none" stroke="#fff"/></g><rect x="1" y="0" width="14" height="7" fill="#808080" /><path d="M1.5 7V12.5H15M14.5 7V12.5" stroke="#808080" fill="none" stroke-width="1" /><path d="M3 9.5H11" stroke="#808080" fill="none" stroke-width="1" stroke-dasharray="1 2"/><circle cx="11.5" cy="10.5" r="1" fill="none" stroke="#808080"/></svg>
<svg class="a" style="left:914px;top:221px" width="17" height="15" viewBox="0 0 17 15" ><g transform="translate(1,1)"><rect x="1" y="0" width="14" height="6" fill="#fff" /><path d="M1.5 6V13.5H15M14.5 6V13" stroke="#fff" fill="none" stroke-width="1" /><path d="M3 8.5H13M3 11.5H13" stroke="#fff" fill="none" stroke-width="1" stroke-dasharray="2 2"/></g><rect x="1" y="0" width="14" height="6" fill="#808080" /><path d="M1.5 6V13.5H15M14.5 6V13" stroke="#808080" fill="none" stroke-width="1" /><path d="M3 8.5H13M3 11.5H13" stroke="#808080" fill="none" stroke-width="1" stroke-dasharray="2 2"/></svg>
<svg class="a" style="left:914px;top:243px" width="17" height="15" viewBox="0 0 17 15" ><g transform="translate(1,1)"><rect x="1.5" y="0.5" width="5" height="5" fill="none" stroke="#fff" stroke-width="1"/><rect x="9.5" y="0.5" width="5" height="5" fill="none" stroke="#fff" stroke-width="1"/><path d="M3 4L5 2M11 2L13 4" stroke="#fff" fill="none" stroke-width="1" /><path d="M1 10.5H7M9 10.5H15M3.5 9V12M5.5 9V12M11.5 9V12M13.5 9V12" stroke="#fff" fill="none" stroke-width="1" /></g><rect x="1.5" y="0.5" width="5" height="5" fill="none" stroke="#808080" stroke-width="1"/><rect x="9.5" y="0.5" width="5" height="5" fill="none" stroke="#808080" stroke-width="1"/><path d="M3 4L5 2M11 2L13 4" stroke="#808080" fill="none" stroke-width="1" /><path d="M1 10.5H7M9 10.5H15M3.5 9V12M5.5 9V12M11.5 9V12M13.5 9V12" stroke="#808080" fill="none" stroke-width="1" /></svg>
<svg class="a" style="left:914px;top:265px" width="17" height="15" viewBox="0 0 17 15" ><g transform="translate(1,1)"><rect x="1.5" y="0.5" width="13" height="12" fill="none" stroke="#fff" stroke-width="1"/><path d="M1 2L4 5L7 1.5L10 5L13 1.5L15 4M1 7.5H15" stroke="#fff" fill="none" stroke-width="1" /><path d="M3 10.5H13" stroke="#fff" fill="none" stroke-width="1" stroke-dasharray="2 2"/></g><rect x="1.5" y="0.5" width="13" height="12" fill="none" stroke="#808080" stroke-width="1"/><path d="M1 2L4 5L7 1.5L10 5L13 1.5L15 4M1 7.5H15" stroke="#808080" fill="none" stroke-width="1" /><path d="M3 10.5H13" stroke="#808080" fill="none" stroke-width="1" stroke-dasharray="2 2"/></svg>
<svg class="a" style="left:914px;top:287px" width="17" height="15" viewBox="0 0 17 15" ><g transform="translate(1,1)"><rect x="1" y="0" width="13" height="8" fill="#fff" /><path d="M1.5 8V13M0 12.5H15" stroke="#fff" fill="none" stroke-width="1" /><path d="M3 10.5H12" stroke="#fff" fill="none" stroke-width="1" stroke-dasharray="1 2"/></g><rect x="1" y="0" width="13" height="8" fill="#808080" /><path d="M1.5 8V13M0 12.5H15" stroke="#808080" fill="none" stroke-width="1" /><path d="M3 10.5H12" stroke="#808080" fill="none" stroke-width="1" stroke-dasharray="1 2"/></svg>
<svg class="a" style="left:914px;top:309px" width="17" height="15" viewBox="0 0 17 15" ><g transform="translate(1,1)"><rect x="1" y="0" width="13" height="5" fill="#fff" /><rect x="1.5" y="5.5" width="13" height="7" fill="none" stroke="#fff" stroke-width="1"/><text x="2.5" y="11.6" font-size="6" fill="#fff" font-family="Liberation Sans, sans-serif" font-weight="bold" textLength="8" lengthAdjust="spacingAndGlyphs">AG</text><path d="M12.5 7V12" stroke="#fff" fill="none" stroke-width="1" stroke-dasharray="1 1"/></g><rect x="1" y="0" width="13" height="5" fill="#808080" /><rect x="1.5" y="5.5" width="13" height="7" fill="none" stroke="#808080" stroke-width="1"/><text x="2.5" y="11.6" font-size="6" fill="#808080" font-family="Liberation Sans, sans-serif" font-weight="bold" textLength="8" lengthAdjust="spacingAndGlyphs">AG</text><path d="M12.5 7V12" stroke="#808080" fill="none" stroke-width="1" stroke-dasharray="1 1"/></svg>
<svg class="a" style="left:914px;top:331px" width="17" height="15" viewBox="0 0 17 15" ><g transform="translate(1,1)"><rect x="1.5" y="0.5" width="13" height="12" fill="none" stroke="#fff" stroke-width="1"/><path d="M2 6L4.5 1.5L7 6L9.5 1.5L12 6L14 2" stroke="#fff" fill="none" stroke-width="1.3" /><path d="M1 8.5H15" stroke="#fff" fill="none" stroke-width="1" /><path d="M3 10.5H13" stroke="#fff" fill="none" stroke-width="1" stroke-dasharray="2 2"/></g><rect x="1.5" y="0.5" width="13" height="12" fill="none" stroke="#808080" stroke-width="1"/><path d="M2 6L4.5 1.5L7 6L9.5 1.5L12 6L14 2" stroke="#808080" fill="none" stroke-width="1.3" /><path d="M1 8.5H15" stroke="#808080" fill="none" stroke-width="1" /><path d="M3 10.5H13" stroke="#808080" fill="none" stroke-width="1" stroke-dasharray="2 2"/></svg>
<svg class="a" style="left:914px;top:353px" width="17" height="15" viewBox="0 0 17 15" ><g transform="translate(1,1)"><rect x="1" y="0" width="11" height="8" fill="#fff" /><path d="M12.5 0V13M1.5 8V12.5H15" stroke="#fff" fill="none" stroke-width="1" /><path d="M3 10.5H11" stroke="#fff" fill="none" stroke-width="1" stroke-dasharray="1 1"/></g><rect x="1" y="0" width="11" height="8" fill="#808080" /><path d="M12.5 0V13M1.5 8V12.5H15" stroke="#808080" fill="none" stroke-width="1" /><path d="M3 10.5H11" stroke="#808080" fill="none" stroke-width="1" stroke-dasharray="1 1"/></svg>
<svg class="a" style="left:914px;top:375px" width="17" height="15" viewBox="0 0 17 15" ><g transform="translate(1,1)"><rect x="1" y="0" width="11" height="8" fill="#fff" /><path d="M13.5 0V13M1.5 8V12.5H15" stroke="#fff" fill="none" stroke-width="1" /><path d="M3 10.5H11" stroke="#fff" fill="none" stroke-width="1" stroke-dasharray="1 2"/></g><rect x="1" y="0" width="11" height="8" fill="#808080" /><path d="M13.5 0V13M1.5 8V12.5H15" stroke="#808080" fill="none" stroke-width="1" /><path d="M3 10.5H11" stroke="#808080" fill="none" stroke-width="1" stroke-dasharray="1 2"/></svg>
<svg class="a" style="left:914px;top:397px" width="17" height="15" viewBox="0 0 17 15" ><g transform="translate(1,1)"><rect x="1" y="0" width="14" height="6" fill="#fff" /><path d="M1.5 6V12.5H15M14.5 6V12" stroke="#fff" fill="none" stroke-width="1" /><path d="M3 9.5H13" stroke="#fff" fill="none" stroke-width="1" stroke-dasharray="1 1"/></g><rect x="1" y="0" width="14" height="6" fill="#808080" /><path d="M1.5 6V12.5H15M14.5 6V12" stroke="#808080" fill="none" stroke-width="1" /><path d="M3 9.5H13" stroke="#808080" fill="none" stroke-width="1" stroke-dasharray="1 1"/></svg>
<svg class="a" style="left:914px;top:419px" width="17" height="15" viewBox="0 0 17 15" ><g transform="translate(1,1)"><rect x="1" y="1" width="14" height="8" fill="#fff" /><path d="M1 11.5H15" stroke="#fff" fill="none" stroke-width="1" stroke-dasharray="1 1"/><path d="M1 12.5H15" stroke="#fff" fill="none" stroke-width="1" /></g><rect x="1" y="1" width="14" height="8" fill="#808080" /><path d="M1 11.5H15" stroke="#808080" fill="none" stroke-width="1" stroke-dasharray="1 1"/><path d="M1 12.5H15" stroke="#808080" fill="none" stroke-width="1" /></svg>
<svg class="a" style="left:914px;top:441px" width="17" height="15" viewBox="0 0 17 15" ><g transform="translate(1,1)"><rect x="3" y="0" width="12" height="12" fill="#fff" /><path d="M1.5 0V13H15" stroke="#fff" fill="none" stroke-width="1" /></g><rect x="3" y="0" width="12" height="12" fill="#808080" /><path d="M1.5 0V13H15" stroke="#808080" fill="none" stroke-width="1" /></svg>
<svg class="a" style="left:914px;top:463px" width="17" height="15" viewBox="0 0 17 15" ><g transform="translate(1,1)"><rect x="1.5" y="0.5" width="13" height="12" fill="none" stroke="#fff" stroke-width="1"/><path d="M2 4L4 2L6 4L8 2L10 4L12 2L14 4M2 6.5H14" stroke="#fff" fill="none" stroke-width="1" /><path d="M3 9.5H13M3 11.5H13" stroke="#fff" fill="none" stroke-width="1" stroke-dasharray="1 1"/></g><rect x="1.5" y="0.5" width="13" height="12" fill="none" stroke="#808080" stroke-width="1"/><path d="M2 4L4 2L6 4L8 2L10 4L12 2L14 4M2 6.5H14" stroke="#808080" fill="none" stroke-width="1" /><path d="M3 9.5H13M3 11.5H13" stroke="#808080" fill="none" stroke-width="1" stroke-dasharray="1 1"/></svg>
<svg class="a" style="left:914px;top:485px" width="17" height="15" viewBox="0 0 17 15" ><g transform="translate(1,1)"><rect x="1.5" y="0.5" width="13" height="12" fill="none" stroke="#fff" stroke-width="1"/><path d="M2 6L13 1M9 1V6M1 7.5H15" stroke="#fff" fill="none" stroke-width="1" /><path d="M3 10.5H13" stroke="#fff" fill="none" stroke-width="1" stroke-dasharray="2 1"/><rect x="9" y="8" width="5" height="2" fill="#fff" /></g><rect x="1.5" y="0.5" width="13" height="12" fill="none" stroke="#808080" stroke-width="1"/><path d="M2 6L13 1M9 1V6M1 7.5H15" stroke="#808080" fill="none" stroke-width="1" /><path d="M3 10.5H13" stroke="#808080" fill="none" stroke-width="1" stroke-dasharray="2 1"/><rect x="9" y="8" width="5" height="2" fill="#808080" /></svg>
<svg class="a" style="left:914px;top:507px" width="17" height="15" viewBox="0 0 17 15" ><g transform="translate(1,1)"><rect x="1" y="0" width="14" height="8" fill="#fff" /><path d="M1.5 8V12.5H15M14.5 8V12" stroke="#fff" fill="none" stroke-width="1" /><path d="M3 10.5H11" stroke="#fff" fill="none" stroke-width="1" stroke-dasharray="1 1"/></g><rect x="1" y="0" width="14" height="8" fill="#808080" /><path d="M1.5 8V12.5H15M14.5 8V12" stroke="#808080" fill="none" stroke-width="1" /><path d="M3 10.5H11" stroke="#808080" fill="none" stroke-width="1" stroke-dasharray="1 1"/></svg>
<svg class="a" style="left:914px;top:529px" width="17" height="15" viewBox="0 0 17 15" ><g transform="translate(1,1)"><rect x="1.5" y="0.5" width="12" height="9" fill="none" stroke="#fff" stroke-width="1"/><rect x="3" y="2" width="8" height="6" fill="#fff" /><path d="M14.5 2V13H3" stroke="#fff" fill="none" stroke-width="1" /><path d="M4 11.5H12" stroke="#fff" fill="none" stroke-width="1" stroke-dasharray="1 1"/></g><rect x="1.5" y="0.5" width="12" height="9" fill="none" stroke="#808080" stroke-width="1"/><rect x="3" y="2" width="8" height="6" fill="#808080" /><path d="M14.5 2V13H3" stroke="#808080" fill="none" stroke-width="1" /><path d="M4 11.5H12" stroke="#808080" fill="none" stroke-width="1" stroke-dasharray="1 1"/></svg>
<svg class="a" style="left:914px;top:551px" width="17" height="15" viewBox="0 0 17 15" ><g transform="translate(1,1)"><rect x="1.5" y="0.5" width="13" height="12" fill="none" stroke="#fff" stroke-width="1"/><path d="M2 5L4 2L6 5L8 2L10 5L12 2L14 5M1 7.5H15" stroke="#fff" fill="none" stroke-width="1" /><path d="M3 9.5H13M3 11.5H13" stroke="#fff" fill="none" stroke-width="1" stroke-dasharray="1 1"/></g><rect x="1.5" y="0.5" width="13" height="12" fill="none" stroke="#808080" stroke-width="1"/><path d="M2 5L4 2L6 5L8 2L10 5L12 2L14 5M1 7.5H15" stroke="#808080" fill="none" stroke-width="1" /><path d="M3 9.5H13M3 11.5H13" stroke="#808080" fill="none" stroke-width="1" stroke-dasharray="1 1"/></svg>
<div class="a " style="left:912px;top:572px;width:23px;height:1px;background:#808080"></div>
<div class="a " style="left:912px;top:573px;width:23px;height:1px;background:#fff"></div>
<div class="a " style="left:912px;top:602px;width:23px;height:1px;background:#808080"></div>
<div class="a " style="left:912px;top:603px;width:23px;height:1px;background:#fff"></div>
<svg class="a" style="left:914px;top:580px" width="17" height="15" viewBox="0 0 17 15" ><g transform="translate(1,1)"><path d="M1 12.5C2 9 5 7.5 8 6.5C11 5.5 13 4 15.5 1.5" stroke="#fff" fill="none" stroke-width="3" /><path d="M4 13L9 8.5M9 10.5L14 6.5" stroke="#fff" fill="none" stroke-width="2" /></g><path d="M1 12.5C2 9 5 7.5 8 6.5C11 5.5 13 4 15.5 1.5" stroke="#808080" fill="none" stroke-width="3" /><path d="M4 13L9 8.5M9 10.5L14 6.5" stroke="#808080" fill="none" stroke-width="2" /></svg>
<svg class="a" style="left:914px;top:610px" width="17" height="17" viewBox="0 0 17 17" ><g transform="translate(1,1)"><rect x="2" y="2" width="12" height="12" fill="#fff" /><path d="M0 4.5H2M0 7.5H2M0 10.5H2M14 4.5H16M14 7.5H16M14 10.5H16M4.5 0V2M7.5 0V2M10.5 0V2M4.5 14V16M7.5 14V16M10.5 14V16" stroke="#fff" fill="none" stroke-width="1" stroke-dasharray="1 1"/></g><rect x="2" y="2" width="12" height="12" fill="#808080" /><path d="M0 4.5H2M0 7.5H2M0 10.5H2M14 4.5H16M14 7.5H16M14 10.5H16M4.5 0V2M7.5 0V2M10.5 0V2M4.5 14V16M7.5 14V16M10.5 14V16" stroke="#808080" fill="none" stroke-width="1" stroke-dasharray="1 1"/></svg>
<svg class="a" style="left:920px;top:630px" width="6" height="7" viewBox="0 0 6 7" ><path d="M0.5 0V6L4 3Z" stroke="#808080" fill="#808080" stroke-width="0.2" /></svg>
<svg class="a" style="left:913px;top:644px" width="19" height="15" viewBox="0 0 19 15" ><path d="M1.5 7V2.5Q1.5 1 3 1.2L5 2.2L6 5.5H15Q17.5 5.5 17.5 8V11Q17.5 13.5 15 13.5H4Q1.5 13.5 1.5 11Z" stroke="#606000" fill="#ffff10" stroke-width="0.8" /><circle cx="3.4" cy="3.6" r="0.8" fill="#808000"/></svg>
<div class="t" style="left:916.2px;top:650.57px;font-size:7.6px;line-height:7.6px;letter-spacing:-0.548px;font-weight:bold;">1.4v</div>
<svg class="a" style="left:921px;top:664px" width="5" height="7" viewBox="0 0 5 7" ><path d="M0 0V6L3.5 3Z" stroke="#000" fill="#000" stroke-width="0.2" /></svg>
<div class="a " style="left:910px;top:684px;width:27px;height:1px;background:#fff"></div>
<div class="a " style="left:200px;top:661px;width:1px;height:24px;background:#404040"></div>
<div class="a thin-s" style="left:333px;top:688px;width:155px;height:16px;"></div>
<div class="a thin-s" style="left:490px;top:688px;width:180px;height:16px;"></div>
<div class="a thin-s" style="left:672px;top:688px;width:182px;height:16px;"></div>
<div class="a thin-s" style="left:856px;top:688px;width:64px;height:16px;"></div>
<div class="t" style="left:336px;top:690.93px;font-size:11.3px;line-height:11.3px;">-</div>
<div class="t" style="left:493px;top:690.93px;font-size:11.3px;line-height:11.3px;letter-spacing:-0.258px;">DecimalCounter: Simulating...</div>
<div class="t" style="left:675px;top:690.93px;font-size:11.3px;line-height:11.3px;letter-spacing:0.064px;">Tran: 0.020 s</div>
<svg class="a" style="left:861px;top:690px" width="58" height="12" viewBox="0 0 58 12" ><rect x="1" y="0" width="6" height="12" fill="#20e020" /><rect x="1" y="0" width="1" height="12" fill="#10a010" /><rect x="9.5" y="0.5" width="5" height="11" fill="#dcd8d0" stroke="#b8b4ac" stroke-width="1"/><rect x="17.5" y="0.5" width="5" height="11" fill="#dcd8d0" stroke="#b8b4ac" stroke-width="1"/><rect x="25.5" y="0.5" width="5" height="11" fill="#dcd8d0" stroke="#b8b4ac" stroke-width="1"/><rect x="33.5" y="0.5" width="5" height="11" fill="#dcd8d0" stroke="#b8b4ac" stroke-width="1"/><rect x="41.5" y="0.5" width="5" height="11" fill="#dcd8d0" stroke="#b8b4ac" stroke-width="1"/><rect x="49" y="0" width="6" height="12" fill="#20e020" /><rect x="49" y="0" width="1" height="12" fill="#10a010" /></svg>
<svg class="a" style="left:923px;top:691px" width="13" height="13" viewBox="0 0 13 13" ><path d="M12 1L1 12M12 5L5 12M12 9L9 12" stroke="#808080" fill="none" stroke-width="1" /><path d="M12 2L2 12M12 6L6 12M12 10L10 12" stroke="#fff" fill="none" stroke-width="1" /></svg>
</body></html>
